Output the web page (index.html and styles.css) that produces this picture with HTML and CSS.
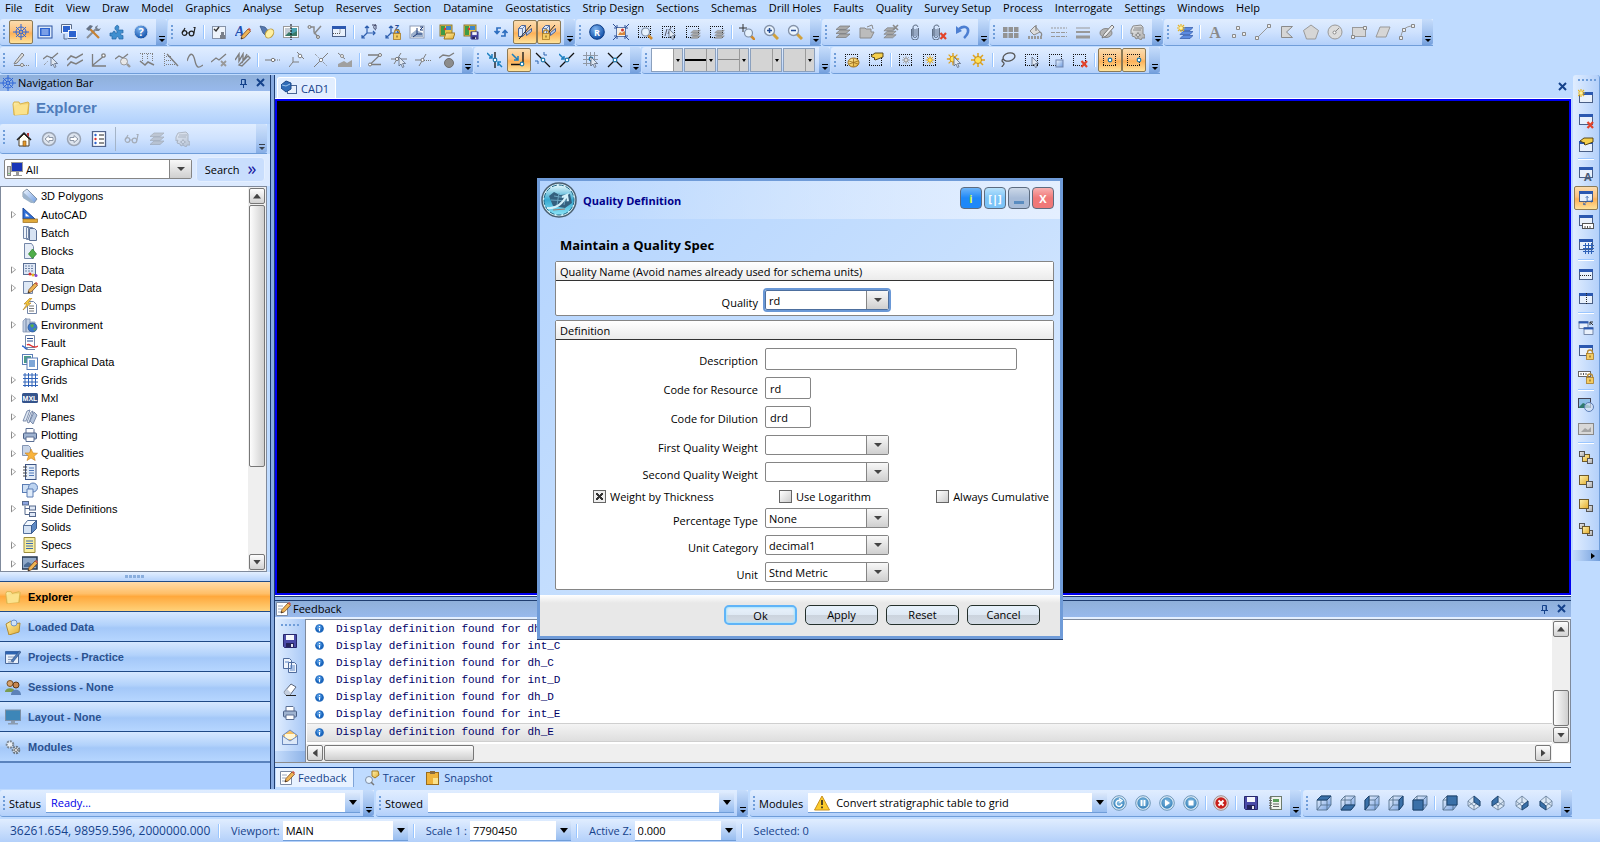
FILE: index.html
```html
<!DOCTYPE html>
<html lang="en">
<head>
    <meta charset="UTF-8">
    <title>Quality Definition</title>
    <link rel="stylesheet" href="styles.css">
</head>
<body>

<!-- icon sprite -->
<svg class="sprite" aria-hidden="true">
    <defs>
        <linearGradient id="g-blue" x1="0" y1="0" x2="1" y2="1"><stop offset="0" stop-color="#f2f8ff"/><stop offset="1" stop-color="#6d9be0"/></linearGradient>
        <linearGradient id="g-gold" x1="0" y1="0" x2="1" y2="1"><stop offset="0" stop-color="#fff3b0"/><stop offset="1" stop-color="#e3ac2c"/></linearGradient>
        <linearGradient id="g-gray" x1="0" y1="0" x2="1" y2="1"><stop offset="0" stop-color="#f0f0f0"/><stop offset="1" stop-color="#a8a8a8"/></linearGradient>
        <radialGradient id="g-ball" cx=".4" cy=".3" r=".7"><stop offset="0" stop-color="#7fb4f0"/><stop offset="1" stop-color="#0f4fa8"/></radialGradient>
        <radialGradient id="g-disc" cx=".5" cy=".4" r=".6"><stop offset="0" stop-color="#8fc4e8"/><stop offset="1" stop-color="#3580b8"/></radialGradient>
        <linearGradient id="g-orb" x1="0" y1="0" x2="0" y2="1"><stop offset="0" stop-color="#e6f8fd"/><stop offset=".5" stop-color="#36a8d0"/><stop offset="1" stop-color="#8be4f8"/></linearGradient>
    </defs>

    <!-- shared parts -->
    <symbol id="p-dots" viewBox="0 0 16 16"><path d="M1 2.500h13M1 13.500h13M1.500 2v12M13.500 2v12" fill="none" stroke="#111" stroke-dasharray="1 1"/></symbol>
    <symbol id="p-cursor" viewBox="0 0 16 16"><path d="M8 5v9l2-2 1.500 3.500 1.500-.7-1.400-3.300h3z" fill="#dfe7f2" stroke="#5c6a80" stroke-width=".8"/></symbol>
    <symbol id="p-lens" viewBox="0 0 16 16"><path d="M10.500 10.500l4.500 4.500" stroke="#d08a2c" stroke-width="2.600"/><circle cx="8.500" cy="8" r="4" fill="#e6f2fd" stroke="#7e8ea6" stroke-width="1.200"/></symbol>
    <symbol id="p-x" viewBox="0 0 16 16"><path d="M9.500 9l5.500 6M15 9l-5.500 6" stroke="#e2432a" stroke-width="2.200"/></symbol>
    <symbol id="p-pencil" viewBox="0 0 16 16"><path d="M6 15l1-3.500 6-6.500 2.500 2.300-6 6.500z" fill="#efb454" stroke="#7a4a20" stroke-width=".8"/><path d="M13 5l1-1.200 2 2-1 1.500z" fill="#d05a4a"/><path d="M6 15l.5-1.700 1.300 1z" fill="#222"/></symbol>
    <symbol id="p-lock" viewBox="0 0 16 16"><path d="M9.500 10V8.500a2.500 2.500 0 0 1 5 0V10" fill="none" stroke="#b58a35" stroke-width="1.300"/><rect x="8.500" y="9.500" width="7" height="6" fill="#f4cc62" stroke="#a87c28" stroke-width=".8"/><path d="M12 11.500v2" stroke="#6d4c10"/></symbol>
    <symbol id="p-win" viewBox="0 0 16 16"><rect x="1.500" y="2.500" width="13" height="10" fill="#e9f1fc" stroke="#4a5f86"/><path d="M1 3.500h14" stroke="#2b58b0" stroke-width="3"/></symbol>
    <symbol id="p-sun" viewBox="0 0 16 16"><path d="M8 1v14M1 8h14M3 3l10 10M13 3L3 13" stroke="#e0a21c" stroke-width="1.500"/><circle cx="8" cy="8" r="3.500" fill="#ffe25a" stroke="#c98d12"/></symbol>
    <symbol id="p-spark" viewBox="0 0 16 16"><path d="M4 0v8M0 4h8M1 1l6 6M7 1L1 7" stroke="#e8b420" stroke-width="1.200"/><circle cx="4" cy="4" r="1.800" fill="#fff2a0"/></symbol>
    <symbol id="p-node" viewBox="0 0 16 16"><circle cx="8" cy="8" r="1.800" fill="#fff" stroke="#1d78a8" stroke-width="1.200"/></symbol>
    <symbol id="p-layers" viewBox="0 0 16 16"><path d="M1 13.500l4-3.500h10l-4 3.500zM1 9.500L5 6h10l-4 3.500zM1 5.500L5 2h10l-4 3.500z" fill="#a9a9a9" stroke="#777" stroke-width=".7"/></symbol>
    <symbol id="p-cube" viewBox="0 0 16 16"><path d="M1 5l4-4h10v9l-4 5H1z" fill="url(#g-blue)"/><path d="M1 5h10v10H1zM1 5l4-4h10v9l-4 5M11 5l4-4M5 1v9h10M5 10l-4 5" fill="none" stroke="#56728f" stroke-width=".9"/></symbol>

    <!-- row 1 -->
    <symbol id="wheel" viewBox="0 0 16 16"><g fill="none" stroke="#2f66d8"><circle cx="8" cy="8" r="5"/><circle cx="8" cy="8" r="1.500"/><path d="M8 0v6M8 10v6M0 8h6M10 8h6M3 3l4 4M9 9l4 4M13 3L9 7M7 9l-4 4"/></g></symbol>
    <symbol id="monitor" viewBox="0 0 16 16"><rect x="1" y="2" width="14" height="12" fill="#dbe9fb" stroke="#2a52a0"/><rect x="3" y="4" width="10" height="8" fill="#2c63cf"/><path d="M4.500 6h7M4.500 8h7M4.500 10h7" stroke="#c9ddff"/></symbol>
    <symbol id="windows" viewBox="0 0 16 16"><rect x="1.500" y="1.500" width="8" height="7" fill="#2c63cf" stroke="#f2f6fc"/><rect x="7.500" y="6.500" width="8" height="7" fill="#2c63cf" stroke="#f2f6fc"/><path d="M.5 9V.5h10V5M6.500 14.500h9.500M3 10v5h3" stroke="#5a6c8c" fill="none"/></symbol>
    <symbol id="tools" viewBox="0 0 16 16"><path d="M2 14L11 5" stroke="#8a8f98" stroke-width="2"/><path d="M5 5l9 9" stroke="#c68132" stroke-width="2.200"/><path d="M1 5l4-4 3 1-4 5z" fill="#667386"/><path d="M10 3l3-2-1 3 2 1 2-1-2 3-3 0z" fill="#75808f"/></symbol>
    <symbol id="puzzle" viewBox="0 0 16 16"><path d="M1 9h3c-1-2 3-3 2 0h2V7c-2-1-3-3-1-5s4 1 2 4h5v3c-3-1-3 3 0 2.500V15H10c0-3-3-3-3 0H3v-3H1z" fill="#3f8fd0" stroke="#2466a4" stroke-width=".7"/></symbol>
    <symbol id="help" viewBox="0 0 16 16"><circle cx="8" cy="8" r="7" fill="url(#g-ball)" stroke="#d4e2f6"/><text x="8" y="12" text-anchor="middle" font-size="11" font-weight="bold" fill="#fff">?</text></symbol>
    <symbol id="glasses" viewBox="0 0 16 16"><g fill="none" stroke="#222" stroke-width="1.200"><circle cx="3.500" cy="9" r="2.300"/><circle cx="10.500" cy="9.500" r="2.300"/><path d="M5.800 9h2.400M1.200 9L4 4M12.800 9.500L14 3.500h-1.500"/></g></symbol>
    <symbol id="checkimg" viewBox="0 0 16 16"><rect x="1.500" y="2.500" width="13" height="12" fill="#eef3fa" stroke="#8592a8"/><path d="M3 5l2 2 3-4" stroke="#333" fill="none" stroke-width="1.400"/><path d="M9 11h5v4H9zM10 8h3v3h-3z" fill="#7a7f88"/></symbol>
    <symbol id="apencil" viewBox="0 0 16 16"><text x="0" y="12" font-size="14" font-weight="bold" font-style="italic" font-family="Liberation Serif, serif" fill="#1f4fb0">A</text><use href="#p-pencil"/></symbol>
    <symbol id="lamp" viewBox="0 0 16 16"><path d="M1 2l5 1 5 6-3 4-4-4z" fill="#5678b0" stroke="#32507e" stroke-width=".7"/><ellipse cx="10.500" cy="9.500" rx="5" ry="3.600" transform="rotate(-50 10.500 9.500)" fill="#fff0a0" stroke="#c0a040"/></symbol>
    <symbol id="imgsplit" viewBox="0 0 16 16"><rect x=".5" y="2.500" width="15" height="11" fill="#fff" stroke="#999"/><path d="M2 4h6v8H2z" fill="#c4ccd4"/><path d="M8 4h6v8H8z" fill="#4aa0b0"/><path d="M2 12l4-4 3 2 5-3v5z" fill="#3b7a68"/><path d="M8 0v16" stroke="#000" stroke-dasharray="2 1"/></symbol>
    <symbol id="pathpen" viewBox="0 0 16 16"><path d="M2 3l5 0 0 5 4 5M7 10l7-8" fill="none" stroke="#8b8b8b" stroke-width="1.500"/><circle cx="2.500" cy="3" r="1.500" fill="#ddd" stroke="#777"/><circle cx="11" cy="13" r="1.500" fill="#ddd" stroke="#777"/></symbol>
    <symbol id="rulerwin" viewBox="0 0 16 16"><use href="#p-win"/><path d="M2 9.500h7v-4" stroke="#555" stroke-dasharray="1 1" fill="none"/></symbol>
    <symbol id="axes" viewBox="0 0 16 16"><g fill="none" stroke="#2f5fae" stroke-width="1.200"><path d="M6 9V2M6 9l-5 5M6 9h8M4 4l2-2 2 2M1 11v3h3M12 7l2 2-2 2"/></g></symbol>
    <symbol id="axesrot" viewBox="0 0 16 16"><use href="#axes"/><path d="M11 1h4v4M15 1c-3 0-3 4 0 5" stroke="#3a3f60" fill="none"/></symbol>
    <symbol id="axeslock" viewBox="0 0 16 16"><use href="#axes"/><text x="10" y="6" font-size="7" font-weight="bold" fill="#234a94">Z</text><use href="#p-lock"/></symbol>
    <symbol id="axesimg" viewBox="0 0 16 16"><rect x="1" y="2" width="14" height="12" fill="#fff" stroke="#8d9bb5"/><path d="M2 10l5-4 7 3v4H2z" fill="#9db0cc"/><path d="M8 10V4M8 10l-4 3M8 10h5M11 3h3l-3 3h3" stroke="#1d3a78" fill="none"/></symbol>
    <symbol id="mapfolder" viewBox="0 0 16 16"><rect x="1" y="1" width="12" height="11" fill="#e8c24a" stroke="#8b7a35"/><path d="M2 2h4v9H2z" fill="#3f9b46"/><path d="M7 2h5v4H7z" fill="#3f86c8"/><circle cx="6" cy="5" r="1.200" fill="#d33"/><path d="M5 15l2-6h9l-2 6z" fill="url(#g-gold)" stroke="#a07820"/></symbol>
    <symbol id="save" viewBox="0 0 16 16"><path d="M1.500 1.500h13v13h-12l-1-1z" fill="#4a4aa8" stroke="#27276c"/><path d="M4 2h8v5H4z" fill="#f4f6fb"/><path d="M4 10h8v4H4z" fill="#23235c"/><path d="M9 11h2v3H9z" fill="#e6e6f0"/></symbol>
    <symbol id="mapsave" viewBox="0 0 16 16"><rect x="1" y="1" width="12" height="11" fill="#e8c24a" stroke="#8b7a35"/><path d="M2 2h4v9H2z" fill="#3f9b46"/><path d="M7 2h5v4H7z" fill="#3f86c8"/><circle cx="6" cy="5" r="1.200" fill="#d33"/><use href="#save" x="7" y="7" width="9" height="9"/></symbol>
    <symbol id="refresh" viewBox="0 0 16 16"><path d="M8 4H4v5M1.500 7L4 9.500 6.500 7M8 12h4V7M9.500 9L12 6.500 14.500 9" fill="none" stroke="#2f6fc0" stroke-width="1.700"/></symbol>
    <symbol id="solid" viewBox="0 0 16 16"><path d="M1.500 4.500l3-3h4v8l-3 3h-4z" fill="#dbe8fb" stroke="#4c6496"/><path d="M1.500 4.500h4v8M5.500 4.500l3-3" fill="none" stroke="#4c6496" stroke-width=".8"/><path d="M9.500 8.500l5-4v3l-5 4z" fill="#b4caee" stroke="#4c6496"/><path d="M2 15L14 1" stroke="#222"/></symbol>
    <symbol id="solidlock" viewBox="0 0 16 16"><use href="#solid"/><use href="#p-lock" x="-7" y="0"/></symbol>
    <symbol id="rball" viewBox="0 0 16 16"><circle cx="8" cy="8" r="7.300" fill="url(#g-ball)" stroke="#0d3c86"/><text x="8" y="11.500" text-anchor="middle" font-size="9" font-weight="bold" fill="#fff">R</text></symbol>
    <symbol id="fit" viewBox="0 0 16 16"><rect x="3.500" y="3.500" width="9" height="9" fill="#f6efe4" stroke="#5c77ab"/><path d="M5 11l2-3 2 1 3-2v4z" fill="#d9873a"/><circle cx="9.500" cy="6" r="1.500" fill="#c33"/><path d="M0 0l4 4M16 0l-4 4M0 16l4-4M16 16l-4-4M1 4h3V1M15 4h-3V1M1 12h3v3M15 12h-3v3" stroke="#2d4f94" fill="none"/></symbol>
    <symbol id="zoomrect" viewBox="0 0 16 16"><use href="#p-dots"/><use href="#p-lens"/></symbol>
    <symbol id="selpick" viewBox="0 0 16 16"><use href="#p-dots"/><path d="M4 12l2-7M7 10l3-7" stroke="#556"/><use href="#p-cursor"/></symbol>
    <symbol id="sellayers" viewBox="0 0 16 16"><use href="#p-dots"/><use href="#p-layers" x="5" y="5" width="11" height="11"/></symbol>
    <symbol id="zoompt" viewBox="0 0 16 16"><path d="M4 0v8M0 4h8" stroke="#333"/><use href="#p-lens" x="1" y="1"/></symbol>
    <symbol id="zoomin" viewBox="0 0 16 16"><path d="M10 10l5 5" stroke="#d0a03c" stroke-width="3"/><circle cx="6.500" cy="6.500" r="5" fill="#eaf4fe" stroke="#8492a8" stroke-width="1.300"/><path d="M4 6.500h5M6.500 4v5" stroke="#234a94" stroke-width="1.500"/></symbol>
    <symbol id="zoomout" viewBox="0 0 16 16"><path d="M10 10l5 5" stroke="#d0a03c" stroke-width="3"/><circle cx="6.500" cy="6.500" r="5" fill="#eaf4fe" stroke="#8492a8" stroke-width="1.300"/><path d="M4 6.500h5" stroke="#234a94" stroke-width="1.500"/></symbol>
    <symbol id="grayfolder" viewBox="0 0 16 16"><path d="M1 14V4h5l1 1h5v3h3l-3 6z" fill="#bcbcbc" stroke="#8a8a8a"/><path d="M8 3l5-2 1 4" fill="none" stroke="#888"/></symbol>
    <symbol id="layersx" viewBox="0 0 16 16"><use href="#p-layers" y="2" width="14" height="14"/><path d="M10 1l5 5M15 1l-5 5" stroke="#8a8a8a" stroke-width="1.600"/></symbol>
    <symbol id="clip" viewBox="0 0 16 16"><path d="M10 4.500v7a2 2 0 0 1-4 0V4a2.500 2.500 0 0 1 5-1M6 4v8M8 5v7M11.500 4v8.500a3.500 3.500 0 0 1-7 0V5" fill="none" stroke="#5f6f86"/></symbol>
    <symbol id="clipx" viewBox="0 0 16 16"><use href="#clip" x="-3"/><use href="#p-x"/></symbol>
    <symbol id="undo" viewBox="0 0 16 16"><path d="M4 5c5-4 10-2 9 3-.5 3-3 5-4 6" fill="none" stroke="#4d7fd2" stroke-width="2.600"/><path d="M1 2v8l6-3z" fill="#4d7fd2"/></symbol>
    <symbol id="grid4" viewBox="0 0 16 16"><path d="M0 3h4.500v5H0zM5.500 3H10v5H5.500zM11 3h4.500v5H11zM0 9h4.500v5H0zM5.500 9H10v5H5.500zM11 9h4.500v5H11z" fill="#939393"/></symbol>
    <symbol id="bucket" viewBox="0 0 16 16"><path d="M3 7l5-5 5 6-6 3z" fill="#ddd" stroke="#888"/><path d="M9 1v6M13 8c2 1 2 3 1 4" stroke="#888" fill="none" stroke-width="1.300"/><path d="M1 13.500h14" stroke="#999" stroke-width="3" stroke-dasharray="2 1"/></symbol>
    <symbol id="dashes" viewBox="0 0 16 16"><path d="M0 4h16" stroke="#999" stroke-dasharray="2 1"/><path d="M0 8.500h16M0 12.500h16" stroke="#999" stroke-dasharray="4 1"/></symbol>
    <symbol id="lines" viewBox="0 0 16 16"><path d="M1 4h14" stroke="#999"/><path d="M1 8h14" stroke="#999" stroke-width="2"/><path d="M1 13h14" stroke="#999" stroke-width="3"/></symbol>
    <symbol id="brush" viewBox="0 0 16 16"><ellipse cx="7" cy="9" rx="6" ry="4.500" fill="#b4b4b4" stroke="#888"/><path d="M3 14l2-4 8-9 2 2-8 9z" fill="#eee" stroke="#777"/></symbol>
    <symbol id="hand" viewBox="0 0 16 16"><path d="M2 6l2-4 8-1 2 2v7l2 1v3h-3l-1 2-3-2-2 1-1-2-3-1 1-3-2 1z" fill="url(#g-gray)" stroke="#8a8a8a"/><path d="M4 6h8M5 4h8M9 8v6M6 11h6" stroke="#8a8a8a"/><circle cx="9" cy="11" r="1.500" fill="#eee" stroke="#888"/></symbol>
    <symbol id="newlayer" viewBox="0 0 16 16"><path d="M3 14.500l3-3h10l-3 3zM3 10.500l3-3h10l-3 3zM3 6.500l3-3h10l-3 3z" fill="#5c8be0" stroke="#2e57a8" stroke-width=".7"/><use href="#p-spark"/></symbol>
    <symbol id="bigA" viewBox="0 0 16 16"><text x="8" y="14" text-anchor="middle" font-size="16" font-weight="bold" font-family="Liberation Serif, serif" fill="#8a8a8a">A</text></symbol>
    <symbol id="points" viewBox="0 0 16 16"><g fill="#eee" stroke="#8a8a8a"><path d="M1.500 10.500h3v3h-3zM5.500 2.500h3v3h-3zM11.500 8.500h3v3h-3z"/></g></symbol>
    <symbol id="line" viewBox="0 0 16 16"><path d="M2 14L14 2" stroke="#999"/><path d="M.5 12.500h3v3h-3zM12.500.5h3v3h-3z" fill="#eee" stroke="#8a8a8a"/></symbol>
    <symbol id="poly" viewBox="0 0 16 16"><path d="M2.500 2.500h11l-6 5.500 6 5.500h-11z" fill="#d6d6d6" stroke="#8a8a8a"/></symbol>
    <symbol id="penta" viewBox="0 0 16 16"><path d="M8 1l7.500 5.500L12.500 15h-9L.5 6.500z" fill="#d6d6d6" stroke="#999"/></symbol>
    <symbol id="circle" viewBox="0 0 16 16"><circle cx="8" cy="8" r="7" fill="#dcdcdc" stroke="#999"/><path d="M8 8l4-4" stroke="#888"/><circle cx="7.500" cy="8.500" r="1.500" fill="#fff" stroke="#888"/></symbol>
    <symbol id="rect" viewBox="0 0 16 16"><rect x="1.500" y="3.500" width="13" height="9" fill="#d6d6d6" stroke="#999"/><path d="M12.500 2.500h3v3h-3zM.5 11.500h3v3h-3z" fill="#eee" stroke="#888"/></symbol>
    <symbol id="para" viewBox="0 0 16 16"><path d="M1 13L5 3h10l-4 10z" fill="#d6d6d6" stroke="#999"/></symbol>
    <symbol id="arc" viewBox="0 0 16 16"><path d="M2 14C2 7 6 2 14 2" fill="none" stroke="#999"/><path d="M.5 12.500h3v3h-3zM12.500.5h3v3h-3zM3.500 4.500h3v3h-3z" fill="#eee" stroke="#888"/></symbol>

    <!-- row 2 -->
    <symbol id="penpt" viewBox="0 0 16 16"><g fill="none" stroke="#7e7e7e"><path d="M2 10l7-9 2 2-7 8-3 1z" fill="#ddd"/><path d="M1 13.500h7"/><circle cx="9" cy="13" r="1.500" fill="#fff"/><path d="M11 13.500h5" stroke-dasharray="1 1"/></g></symbol>
    <symbol id="polysel" viewBox="0 0 16 16"><g fill="none" stroke="#7e7e7e"><path d="M0 7l4-3 5 2 6-5" stroke-width="1.300"/><path d="M1 13l4-4" stroke-dasharray="1 1"/></g><use href="#p-cursor"/></symbol>
    <symbol id="waves" viewBox="0 0 16 16"><path d="M0 8l4-4 5 2 7-4M0 14l4-4 5 2 7-4" fill="none" stroke="#7e7e7e" stroke-width="1.500"/></symbol>
    <symbol id="angle" viewBox="0 0 16 16"><g fill="none" stroke="#7e7e7e" stroke-width="1.300"><path d="M1.500 2v12H15M2 13L13 4"/><circle cx="12.500" cy="3.500" r="1.700" fill="#fff"/></g></symbol>
    <symbol id="polyzoom" viewBox="0 0 16 16"><path d="M0 7l4-3 4 2 5-4" fill="none" stroke="#7e7e7e" stroke-width="1.300"/><path d="M12 12l3 3" stroke="#999" stroke-width="2.400"/><circle cx="9" cy="9.500" r="3.500" fill="#e8e8e8" stroke="#999"/></symbol>
    <symbol id="drape" viewBox="0 0 16 16"><path d="M1 1.500h14M3.500 2v7M8.500 2v5M13.500 2v7" fill="none" stroke="#7e7e7e" stroke-dasharray="1 1"/><path d="M1 9l5 4 3-3 6 3" fill="none" stroke="#7e7e7e" stroke-width="1.500"/></symbol>
    <symbol id="project" viewBox="0 0 16 16"><path d="M1.500 1v14M3 4.500h5M3 8.500h7M3 12.500h9" fill="none" stroke="#7e7e7e" stroke-dasharray="1 1"/><path d="M4 2l11 12" stroke="#7e7e7e" stroke-width="1.400"/></symbol>
    <symbol id="curve" viewBox="0 0 16 16"><path d="M0 9c3-9 6-9 8 0s5 6 8 4" fill="none" stroke="#7e7e7e" stroke-width="1.300"/></symbol>
    <symbol id="curvex" viewBox="0 0 16 16"><path d="M0 10l5-4 3 2 7-6" fill="none" stroke="#7e7e7e" stroke-width="1.300"/><path d="M10 9l5 5M15 9l-5 5" stroke="#999" stroke-width="1.800"/></symbol>
    <symbol id="hatchpen" viewBox="0 0 16 16"><path d="M0 8l4-6v7l4-7v7l4-7M4 13L13 4l2 2-8 8z" fill="none" stroke="#7e7e7e" stroke-width="1.400"/></symbol>
    <symbol id="ptline" viewBox="0 0 16 16"><path d="M0 8h6" stroke="#777"/><path d="M10 8h6" stroke="#777" stroke-dasharray="1 1"/><circle cx="8" cy="8" r="1.700" fill="#fff" stroke="#777"/></symbol>
    <symbol id="axesnode" viewBox="0 0 16 16"><g fill="none" stroke="#7e7e7e"><path d="M4 10V5M4 10l-4 5M4 10h6M8 0l7 7"/><circle cx="11" cy="4" r="1.800" fill="#fff"/></g></symbol>
    <symbol id="segx" viewBox="0 0 16 16"><path d="M1 15l6-6M9 7l6-6" stroke="#7e7e7e"/><path d="M2 2l4 4M10 10l4 4" stroke="#7e7e7e" stroke-dasharray="1 1"/><circle cx="8" cy="8" r="1.700" fill="#fff" stroke="#888"/></symbol>
    <symbol id="area" viewBox="0 0 16 16"><path d="M1 1l7 6" stroke="#7e7e7e"/><circle cx="5" cy="4" r="1.500" fill="#fff" stroke="#888"/><path d="M1 15v-3l6-3 3 2 5-3v7z" fill="#a0a0a0"/></symbol>
    <symbol id="zseg" viewBox="0 0 16 16"><path d="M1 3h12L3 12.500h11" fill="none" stroke="#7e7e7e" stroke-width="1.300"/><circle cx="13" cy="3" r="1.500" fill="#fff" stroke="#777"/><circle cx="3" cy="12.500" r="1.500" fill="#fff" stroke="#777"/></symbol>
    <symbol id="crosssel" viewBox="0 0 16 16"><path d="M0 7h16M3 12l7-11" stroke="#7e7e7e"/><circle cx="6" cy="7" r="1.600" fill="#fff" stroke="#777"/><use href="#p-cursor"/></symbol>
    <symbol id="crossdot" viewBox="0 0 16 16"><path d="M0 8h8M4 14l7-12" stroke="#7e7e7e"/><path d="M9 8.500h7" stroke="#777" stroke-dasharray="1 1"/><circle cx="7.500" cy="8" r="1.600" fill="#fff" stroke="#777"/></symbol>
    <symbol id="bomb" viewBox="0 0 16 16"><path d="M0 6l4-3 6 1 5-3" fill="none" stroke="#7e7e7e" stroke-width="1.300"/><circle cx="10" cy="11" r="4.500" fill="#8c8c8c" stroke="#6f6f6f"/></symbol>
    <symbol id="snap1" viewBox="0 0 16 16"><path d="M8 0v16" stroke="#111" stroke-width="1.300"/><path d="M0 1l5 5M2 6h3V2M15 15l-4-4M14 10h-3v4" fill="none" stroke="#1b7fc0" stroke-width="1.500"/><use href="#p-node"/></symbol>
    <symbol id="snap2" viewBox="0 0 16 16"><path d="M0 12.500h10M12 0v11" stroke="#111" stroke-width="1.300"/><path d="M1 2l6 6M3 8h4V4" fill="none" stroke="#1b7fc0" stroke-width="1.500"/><use href="#p-node" x="3" y="4"/></symbol>
    <symbol id="snap3" viewBox="0 0 16 16"><path d="M1 1l14 14" stroke="#111" stroke-width="1.300"/><path d="M0 9h3M9 3V0M3 12V9M12 3H9" stroke="#2a62b0" fill="none"/><use href="#p-node"/></symbol>
    <symbol id="snap4" viewBox="0 0 16 16"><path d="M1 15L15 1" stroke="#111" stroke-width="1.300"/><path d="M0 2l5 5M2 7h3V4" fill="none" stroke="#1b7fc0" stroke-width="1.500"/><use href="#p-node"/></symbol>
    <symbol id="snap5" viewBox="0 0 16 16"><path d="M3.500 0v14M7.500 0v14M11.500 0v14M0 3.500h15M0 7.500h15M0 11.500h15" stroke="#9098a4"/><use href="#p-node" y="-1"/><use href="#p-cursor"/></symbol>
    <symbol id="snap6" viewBox="0 0 16 16"><path d="M1 1l14 14M15 1L1 15" stroke="#111" stroke-width="1.300"/><use href="#p-node"/></symbol>
    <symbol id="selgear" viewBox="0 0 16 16"><use href="#p-dots"/><ellipse cx="9.500" cy="10.500" rx="5.500" ry="4.500" fill="url(#g-gold)" stroke="#9a6c1c"/><path d="M5 9l9 3M5 12l9-3M9.500 6.500v8" stroke="#9a6c1c" stroke-width=".8"/></symbol>
    <symbol id="selhand" viewBox="0 0 16 16"><use href="#p-dots"/><path d="M3 4l4-3h8v4l-5 2-3 1-1-1 1-1-3-1z" fill="#f5cf4c" stroke="#4a3a10" stroke-width=".9"/></symbol>
    <symbol id="selsungray" viewBox="0 0 16 16"><use href="#p-dots"/><path d="M8 4v8M4 8h8M5 5l6 6M11 5l-6 6" stroke="#aaa"/><circle cx="8" cy="8" r="2" fill="#ddd" stroke="#999"/></symbol>
    <symbol id="selsun" viewBox="0 0 16 16"><use href="#p-dots"/><use href="#p-sun" x="3" y="3" width="10" height="10"/></symbol>
    <symbol id="sunpick" viewBox="0 0 16 16"><use href="#p-sun" width="14" height="14"/><use href="#p-cursor"/></symbol>
    <symbol id="lasso" viewBox="0 0 16 16"><ellipse cx="9" cy="5" rx="6" ry="4" transform="rotate(-15 9 5)" fill="none" stroke="#555" stroke-width="1.300"/><path d="M3 7c-3 3 2 3 1 5s-2 2-2 3" fill="none" stroke="#555" stroke-width="1.300"/></symbol>
    <symbol id="selcur" viewBox="0 0 16 16"><use href="#p-dots"/><use href="#p-cursor"/></symbol>
    <symbol id="selblue" viewBox="0 0 16 16"><use href="#p-dots"/><rect x="8" y="8" width="7" height="7" fill="url(#g-blue)" stroke="#7085ad"/></symbol>
    <symbol id="selx" viewBox="0 0 16 16"><use href="#p-dots"/><use href="#p-x"/></symbol>
    <symbol id="selc" viewBox="0 0 16 16"><use href="#p-dots"/><use href="#p-node"/></symbol>
    <symbol id="selr" viewBox="0 0 16 16"><use href="#p-dots"/><use href="#p-node" x="5"/></symbol>

    <!-- navigation -->
    <symbol id="folder" viewBox="0 0 18 16"><path d="M1 4l1-2h5l1 2 8-2 1 1-1 11-14 1z" fill="url(#g-gold)" stroke="#d8b24c"/><path d="M3 6l13-2-1 10-12 1z" fill="#fbe28c"/></symbol>
    <symbol id="home" viewBox="0 0 16 16"><path d="M3 8v7h10V8L8 3z" fill="#fffef4" stroke="#4a3c28"/><path d="M1 9l7-7 7 7" fill="none" stroke="#222" stroke-width="1.500"/><path d="M7 10h3v5H7z" fill="#e49a2c" stroke="#7a4c14" stroke-width=".6"/><path d="M11 2h2v4l-2-2z" fill="#b33"/></symbol>
    <symbol id="back" viewBox="0 0 16 16"><circle cx="8" cy="8" r="6.500" fill="#dde4ee" stroke="#9aa4b4" stroke-width="1.500"/><path d="M4 8l4-3.500v2h4v3H8v2z" fill="#fff" stroke="#8c96a6"/></symbol>
    <symbol id="fwd" viewBox="0 0 16 16"><circle cx="8" cy="8" r="6.500" fill="#dde4ee" stroke="#9aa4b4" stroke-width="1.500"/><path d="M12 8L8 4.500v2H4v3h4v2z" fill="#fff" stroke="#8c96a6"/></symbol>
    <symbol id="listopt" viewBox="0 0 16 16"><rect x="1.500" y=".5" width="13" height="15" fill="#fff" stroke="#52648c" stroke-width="1.300"/><circle cx="4.500" cy="4" r="1.200" fill="#2c63cf"/><circle cx="4.500" cy="8" r="1.200" fill="#d33"/><circle cx="4.500" cy="12" r="1.200" fill="#2c63cf"/><path d="M8 4h5M8 8h5M8 12h5" stroke="#222"/></symbol>
    <symbol id="glassesg" viewBox="0 0 16 16"><g fill="none" stroke="#a4acb8" stroke-width="1.200"><circle cx="3.500" cy="9" r="2.300"/><circle cx="10.500" cy="9.500" r="2.300"/><path d="M5.800 9h2.400M1.200 9L4 4M12.800 9.500L14 3.500h-1.500"/></g></symbol>
    <symbol id="computer" viewBox="0 0 16 16"><rect x="4.500" y="1.500" width="11" height="9" fill="#1734b8" stroke="#9a9a9a"/><path d="M9 11v3H6v1h9v-1h-3v-3z" fill="#999"/><rect x=".5" y="5.500" width="3" height="9" fill="#ccc" stroke="#888"/><path d="M2 12v1" stroke="#3b3"/></symbol>
    <symbol id="pin" viewBox="0 0 10 10"><path d="M2.500 6V1.500h4V6M1 6.500h7M4.500 7v3M6 2v4" fill="none" stroke="#15428b"/></symbol>
    <symbol id="close" viewBox="0 0 10 10"><path d="M1 1l7 7M8 1L1 8" stroke="#15428b" stroke-width="2"/></symbol>

    <!-- tree -->
    <symbol id="t-poly" viewBox="0 0 16 16"><path d="M1 4l4-3 10 10-3 4L1 9z" fill="url(#g-blue)" stroke="#6c7f96" stroke-width=".8"/><path d="M1 4v6l8 5h4z" fill="#9db4cc"/></symbol>
    <symbol id="t-cad" viewBox="0 0 16 16"><path d="M1 1v11h12z" fill="#2f6fd8" stroke="#1c4798"/><path d="M3.500 6v3.500h4z" fill="#fff"/><rect x="1" y="12" width="14.500" height="3.500" fill="#e0a93a" stroke="#9a6c1c" stroke-width=".7"/></symbol>
    <symbol id="t-batch" viewBox="0 0 16 16"><path d="M1.500 1.500h5v12h-5zM4.500 2.500h6v12h-6z" fill="#eef3fa" stroke="#7487a8"/><path d="M7.500 3.500h5l2 2v10h-7z" fill="#d7e3f3" stroke="#5a6f94"/></symbol>
    <symbol id="t-block" viewBox="0 0 16 16"><path d="M2.500.5h7l2 3v12h-9z" fill="#e6edf7" stroke="#7487a8"/><path d="M10.500 6l4 5-4 4.500-4-4.500z" fill="#4fae4a" stroke="#2c7a2c" stroke-width=".7"/></symbol>
    <symbol id="t-data" viewBox="0 0 16 16"><rect x="1.500" y="1.500" width="12" height="11" fill="#dfe8f6" stroke="#5a6f94"/><path d="M3 4h9M3 6.500h9M3 9h9" stroke="#6f84a8" stroke-dasharray="2 1"/><circle cx="8" cy="12" r="1.500" fill="#d33"/><circle cx="11" cy="13" r="1.500" fill="#e8b420"/><circle cx="14" cy="13.500" r="1.500" fill="#8844cc"/></symbol>
    <symbol id="t-design" viewBox="0 0 16 16"><path d="M1.500 1.500h9v12h-9z" fill="#dfe9f6" stroke="#7487a8"/><use href="#p-pencil" y="-2"/></symbol>
    <symbol id="t-dump" viewBox="0 0 16 16"><path d="M5.500 3.500h6l3 3v9h-9z" fill="#fff" stroke="#7487a8"/><path d="M7 8h5M7 10.500h5M7 13h5" stroke="#777"/><path d="M8 0L2 6h3l-4 6 8-7H6l4-5z" fill="#f6c93c" stroke="#b8862a" stroke-width=".7"/></symbol>
    <symbol id="t-env" viewBox="0 0 16 16"><path d="M1 15V4l3-3v14zM4 15V2h4v13zM8 5h5v9H8z" fill="#c2cfe2" stroke="#8496b4" stroke-width=".8"/><circle cx="10.500" cy="10.500" r="4.500" fill="#3c78cc" stroke="#24508f" stroke-width=".7"/><path d="M8 8l3-1 1 2-2 2zM11 12l3-1-1 3z" fill="#58b04a"/></symbol>
    <symbol id="t-fault" viewBox="0 0 16 16"><path d="M3.500.5h9v12h-9z" fill="#fff" stroke="#7487a8"/><path d="M5 3.500h6M5 6h6" stroke="#2a4d90"/><path d="M0 11c3 0 3 4 6 3" stroke="#2c63cf" stroke-width="1.400" fill="none"/><path d="M5 10c3-3 5 5 11 1" stroke="#d33" stroke-width="1.400" fill="none"/><path d="M4 14.500h9" stroke="#7487a8"/></symbol>
    <symbol id="t-graph" viewBox="0 0 16 16"><rect x=".5" y=".5" width="10" height="10" fill="#fff" stroke="#5c7fb8"/><path d="M2 2h7v7H2z" fill="#4c9c8a"/><rect x="5" y="4" width="10.500" height="11.500" fill="#fff" stroke="#5c7fb8"/><path d="M7 6h6v7H7z" fill="#7da6d8"/></symbol>
    <symbol id="t-grid" viewBox="0 0 16 16"><path d="M3 1v14M6.500 1v14M10 1v14M13.500 1v14M1 3h15M1 6.500h15M1 10h15M1 13.500h15" stroke="#2f62b8"/></symbol>
    <symbol id="t-mxl" viewBox="0 0 16 16"><rect y="3" width="16" height="10" rx="1.500" fill="#35548c"/><text x="8" y="11" text-anchor="middle" font-size="7" font-weight="bold" fill="#fff">MXL</text></symbol>
    <symbol id="t-plane" viewBox="0 0 16 16"><path d="M1 12L5 2l3-1-4 11zM5 13L9 3l2-1-4 12z" fill="#dde6f2" stroke="#66799c" stroke-width=".8"/><path d="M8 12l4-9 3 3-4 9z" fill="#b4c4dc" stroke="#66799c" stroke-width=".8"/></symbol>
    <symbol id="printer" viewBox="0 0 16 16"><path d="M4 6V1.500h7l1 1V6" fill="#fff" stroke="#5a6f94"/><rect x="1.500" y="6" width="13" height="6" rx="1" fill="#9fb3d0" stroke="#4a5f86"/><path d="M4 10h8v4.500H4z" fill="#fff" stroke="#5a6f94"/></symbol>
    <symbol id="t-qual" viewBox="0 0 16 16"><path d="M.5.5h6l2 2v8h-8z" fill="#c8d5e8" stroke="#8496b4"/><path d="M9 4l2 4 4.500.3-3.500 3 1.200 4.200L9 13l-4 2.500L6.500 11 3 8l4.500 0z" fill="#f9b43c" stroke="#c8801c" stroke-width=".6"/></symbol>
    <symbol id="t-report" viewBox="0 0 16 16"><rect x="3.500" y=".5" width="10.500" height="15" fill="#e4edf8" stroke="#3d5584"/><path d="M1 3h4M1 6h4M1 9h4M1 12h4" stroke="#444"/><path d="M7 4h5M7 6.500h5M7 9h5M7 11.500h5" stroke="#4f78b8"/></symbol>
    <symbol id="t-shape" viewBox="0 0 16 16"><rect x=".5" y="2.500" width="9" height="8" fill="#cfe0f4" stroke="#5a7cb4"/><circle cx="11" cy="5.500" r="4.500" fill="#bcd3f0" stroke="#5a7cb4"/><path d="M5 7h6v8H5z" fill="#e0ecfa" stroke="#5a7cb4"/></symbol>
    <symbol id="t-side" viewBox="0 0 16 16"><path d="M3 5v8.500h4M3 7.500h4" fill="none" stroke="#55688c"/><rect x=".5" y=".5" width="6" height="3.500" fill="#8ea6e0" stroke="#55688c"/><rect x="7.500" y="5" width="6" height="4" fill="#dfe8f6" stroke="#55688c"/><rect x="7.500" y="11.500" width="6" height="4" fill="#dfe8f6" stroke="#55688c"/></symbol>
    <symbol id="t-solid" viewBox="0 0 16 16"><path d="M1.500 6.500h8v8h-8z" fill="#d4e2f4" stroke="#55719c"/><path d="M1.500 6.500l4-5h9l-5 5z" fill="#f4f9ff" stroke="#55719c"/><path d="M9.500 6.500l5-5v8l-5 5z" fill="#5c88c4" stroke="#3c5c90"/></symbol>
    <symbol id="t-spec" viewBox="0 0 16 16"><path d="M2 .5h11v15H2z" fill="#f9efa0" stroke="#9c8c3c"/><path d="M4 4h7M4 6.500h7M4 9h7M4 11.500h7" stroke="#3d6ab0"/></symbol>
    <symbol id="t-surf" viewBox="0 0 16 16"><rect x="0" y="1" width="15" height="12" fill="#8fa8c8" stroke="#26374f" stroke-width="1.500"/><path d="M2 9l4-3 4 2 4-4v7H2z" fill="#4b6b94"/><use href="#p-pencil"/></symbol>

    <!-- nav buttons -->
    <symbol id="n-loaded" viewBox="0 0 16 16"><path d="M1 5l5-3 3 3 6-1-1 9-10 3z" fill="url(#g-gold)" stroke="#b08a34"/><circle cx="9" cy="4" r="3" fill="#cfe2f8" stroke="#6d93cc"/></symbol>
    <symbol id="n-proj" viewBox="0 0 16 16"><path d="M.5 2.500h13v12H.5z" fill="#e8f0fa" stroke="#4a6a9c"/><path d="M.5 4h13" stroke="#2c63b0" stroke-width="3"/><path d="M3 8h6M3 10.500h5M3 13h6" stroke="#8a9bb8"/><path d="M6 12L14 2l2 1-8 10z" fill="#4f7cb8" stroke="#2c4a80" stroke-width=".6"/></symbol>
    <symbol id="n-users" viewBox="0 0 16 16"><circle cx="5" cy="4.500" r="3" fill="#d8a26c" stroke="#7a5228"/><path d="M0 13c0-5 10-5 10 0z" fill="#7a9c50"/><circle cx="11" cy="6" r="3" fill="#c98850" stroke="#5a3818"/><path d="M6 16c0-7 10-7 10 0z" fill="#5c82b8"/></symbol>
    <symbol id="n-screen" viewBox="0 0 16 16"><rect x=".5" y="1" width="15" height="10.500" fill="#3d86b8" stroke="#7b8ea4"/><path d="M6 12h4v2h3v1.500H3V14h3z" fill="#8b9cb0"/></symbol>
    <symbol id="n-gears" viewBox="0 0 16 16"><circle cx="5" cy="5.500" r="3.300" fill="#e8eef4" stroke="#7a8694" stroke-width="2" stroke-dasharray="2 1"/><circle cx="11" cy="11" r="3.300" fill="#dfe8f0" stroke="#6b7885" stroke-width="2" stroke-dasharray="2 1"/><circle cx="11" cy="11" r="1.500" fill="#fff" stroke="#777"/></symbol>

    <!-- feedback -->
    <symbol id="note" viewBox="0 0 16 16"><path d="M1.500 1.500h11v13h-11z" fill="#fff" stroke="#7b8aa4"/><path d="M3 5h5M3 8h4M3 11h6" stroke="#98a6bd"/><use href="#p-pencil" y="-3" x="0"/></symbol>
    <symbol id="copy" viewBox="0 0 16 16"><path d="M1.500 1.500h6l2 2v8h-8zM6.500 5.500h6l2 2v8h-8z" fill="#eef4fc" stroke="#4f6b9c"/><path d="M3 5h4M8 9h5M8 11h5M8 13h5" stroke="#5f87c8"/></symbol>
    <symbol id="eraser" viewBox="0 0 16 16"><path d="M2 11l7-8 5 3-6 8H4z" fill="#fff" stroke="#5a6478"/><path d="M4 14.500h10" stroke="#222"/><path d="M2 11l2 3h4l1-2-4-4z" fill="#c4cede"/></symbol>
    <symbol id="mail" viewBox="0 0 16 16"><path d="M.5 6.500L8 1l7.500 5.500v9H.5z" fill="#f6c060" stroke="#6d8bbf"/><path d="M3 5h10v5H3z" fill="#fff7d8"/><path d="M.5 7L8 12l7.500-5v8.500H.5z" fill="#dce8f8" stroke="#6d8bbf"/></symbol>
    <symbol id="info" viewBox="0 0 10 10"><circle cx="5" cy="5" r="4.800" fill="#1c66bc"/><circle cx="4.500" cy="3.800" r="2.800" fill="#4b94e0"/><path d="M5 4.500V8M5 2.200v1.200" stroke="#fff" stroke-width="1.300"/></symbol>
    <symbol id="tracer" viewBox="0 0 16 16"><path d="M8 1h6l1 4-4 3-3-2z" fill="url(#g-gold)" stroke="#a07820"/><circle cx="5" cy="10" r="3.500" fill="#e6f2fd" stroke="#7e8ea6"/><path d="M7 12l3 3" stroke="#777" stroke-width="1.500"/></symbol>
    <symbol id="clipboard" viewBox="0 0 16 16"><rect x="1.500" y="2.500" width="12" height="12" fill="#efb33a" stroke="#9a6c1c"/><path d="M5 1h5v3H5z" fill="#8a6a3c"/><path d="M8 8h5v6H8z" fill="#fbe28c"/></symbol>
    <symbol id="tabcad" viewBox="0 0 16 16"><rect x="6.500" y="5.500" width="9" height="8" fill="#e8f0fb" stroke="#4a6696"/><path d="M0 5l5-4 5 2v6l-5 3-5-4z" fill="#2f6cb8" stroke="#1b4888"/><path d="M1 5l4 1 4-2" stroke="#9cc4ee" fill="none"/></symbol>

    <!-- window toolbar -->
    <symbol id="w-new" viewBox="0 0 16 16"><use href="#p-win" y="1"/><use href="#p-spark" x="-1"/></symbol>
    <symbol id="w-del" viewBox="0 0 16 16"><use href="#p-win" y="-1"/><use href="#p-x"/></symbol>
    <symbol id="w-prop" viewBox="0 0 16 16"><use href="#p-win" y="2"/><path d="M2 4l4-3h9v4l-5 2-3 1-1-1 1-1-3-1z" fill="#f5cf4c" stroke="#4a3a10" stroke-width=".9"/></symbol>
    <symbol id="w-text" viewBox="0 0 16 16"><use href="#p-win" y="-1"/><text x="6" y="15" font-size="11" font-weight="bold" fill="#4a5c78">A</text></symbol>
    <symbol id="w-axes" viewBox="0 0 16 16"><use href="#p-win" y="-1"/><use href="#axes" x="5" y="5" width="11" height="11"/></symbol>
    <symbol id="w-scale" viewBox="0 0 16 16"><use href="#p-win" y="-1"/><rect x="4.500" y="9.500" width="11" height="5" fill="#fff" stroke="#555"/><path d="M7 12v2M9.500 12v2M12 12v2" stroke="#555"/></symbol>
    <symbol id="w-grid" viewBox="0 0 16 16"><use href="#p-win" y="-1"/><path d="M7.500 5v11M10.500 5v11M13.500 5v11M5 7.500h11M5 10.500h11M5 13.500h11" stroke="#2f62b8"/></symbol>
    <symbol id="w-hsplit" viewBox="0 0 16 16"><use href="#p-win"/><path d="M2 8.500h12" stroke="#222" stroke-dasharray="1 1"/></symbol>
    <symbol id="w-vsplit" viewBox="0 0 16 16"><use href="#p-win"/><path d="M8.500 2v11" stroke="#222" stroke-dasharray="1 1"/></symbol>
    <symbol id="w-swap" viewBox="0 0 16 16"><use href="#p-win" width="11" height="11"/><use href="#p-win" x="5" y="6" width="11" height="11"/><path d="M15 5l-3-3M12 5V2h3" stroke="#333" fill="none"/></symbol>
    <symbol id="w-lock" viewBox="0 0 16 16"><use href="#p-win" y="-1"/><use href="#p-lock"/></symbol>
    <symbol id="w-rlock" viewBox="0 0 16 16"><rect x=".5" y="3.500" width="12" height="5" fill="#fff" stroke="#666"/><path d="M3 5v2M5.500 5v2M8 5v2" stroke="#555"/><use href="#p-lock"/></symbol>
    <symbol id="w-img" viewBox="0 0 16 16"><rect x=".5" y="1.500" width="12" height="9" fill="#8fc0e8" stroke="#445"/><path d="M1 10l4-4 7 3v2H1z" fill="#2f7a6c"/><circle cx="11" cy="10" r="4.500" fill="#d8e4f4" fill-opacity=".7" stroke="#5a7cb4"/></symbol>
    <symbol id="w-gimg" viewBox="0 0 16 16"><rect x=".5" y="2.500" width="15" height="11" fill="#d8d8d8" stroke="#888"/><path d="M3 11l4-4 3 2 3-3v5z" fill="#a4a4a4"/></symbol>
    <symbol id="w-z1" viewBox="0 0 16 16"><rect x="4.500" y="4.500" width="7" height="7" fill="url(#g-gold)" stroke="#6d5a2c"/><rect x="1.500" y="1.500" width="5" height="5" fill="url(#g-gray)" stroke="#555"/><rect x="9.500" y="8.500" width="5" height="5" fill="url(#g-gray)" stroke="#555"/></symbol>
    <symbol id="w-z2" viewBox="0 0 16 16"><rect x="1.500" y="1.500" width="9" height="9" fill="url(#g-gold)" stroke="#6d5a2c"/><rect x="8.500" y="7.500" width="6" height="6" fill="url(#g-gray)" stroke="#555"/></symbol>
    <symbol id="w-z3" viewBox="0 0 16 16"><rect x="8.500" y="7.500" width="6" height="6" fill="url(#g-gray)" stroke="#555"/><rect x="1.500" y="1.500" width="9" height="9" fill="url(#g-gold)" stroke="#6d5a2c"/></symbol>
    <symbol id="w-z4" viewBox="0 0 16 16"><rect x="1.500" y="1.500" width="5" height="5" fill="url(#g-gray)" stroke="#555"/><rect x="9.500" y="8.500" width="5" height="5" fill="url(#g-gray)" stroke="#555"/><rect x="4.500" y="4.500" width="7" height="7" fill="url(#g-gold)" stroke="#6d5a2c"/></symbol>

    <!-- status toolbar -->
    <symbol id="warn" viewBox="0 0 16 16"><path d="M8 1l7.500 14H.5z" fill="#fccb2c" stroke="#c8901c"/><path d="M8 5v5M8 11.500v1.800" stroke="#222" stroke-width="1.600"/></symbol>
    <symbol id="s-redo" viewBox="0 0 16 16"><circle cx="8" cy="8" r="7.300" fill="#dcebf7" stroke="#6d96b8"/><circle cx="8" cy="8" r="5.700" fill="url(#g-disc)"/><path d="M11 9a3 3 0 1 1-2-3.500M8 3.500l3 2-2.500 2" fill="none" stroke="#fff" stroke-width="1.400"/></symbol>
    <symbol id="s-pause" viewBox="0 0 16 16"><circle cx="8" cy="8" r="7.300" fill="#dcebf7" stroke="#6d96b8"/><circle cx="8" cy="8" r="5.700" fill="url(#g-disc)"/><path d="M6.500 5v6M9.500 5v6" stroke="#fff" stroke-width="1.800"/></symbol>
    <symbol id="s-play" viewBox="0 0 16 16"><circle cx="8" cy="8" r="7.300" fill="#dcebf7" stroke="#6d96b8"/><circle cx="8" cy="8" r="5.700" fill="url(#g-disc)"/><path d="M6 4.500L11 8l-5 3.500z" fill="#fff"/></symbol>
    <symbol id="s-stop" viewBox="0 0 16 16"><circle cx="8" cy="8" r="7.300" fill="#dcebf7" stroke="#6d96b8"/><circle cx="8" cy="8" r="5.700" fill="url(#g-disc)"/><path d="M5.500 5.500h5v5h-5z" fill="#fff"/></symbol>
    <symbol id="s-cancel" viewBox="0 0 16 16"><circle cx="8" cy="8" r="7.300" fill="#e4e0e0" stroke="#a08c8c"/><circle cx="8" cy="8" r="5.700" fill="#c8201c"/><path d="M5.500 5.500l5 5M10.500 5.500l-5 5" stroke="#fff" stroke-width="2"/></symbol>
    <symbol id="s-book" viewBox="0 0 16 16"><rect x="3.500" y="1.500" width="11" height="13" fill="#f0f4ee" stroke="#6d7a6d"/><path d="M6 4h6v3H6z" fill="#5ca05c"/><path d="M2 3h3M2 5.500h3M2 8h3M2 10.500h3M2 13h3M6 9h6M6 11.500h6" stroke="#666"/></symbol>
    <symbol id="c-top" viewBox="0 0 16 16"><use href="#p-cube"/><path d="M1 5l4-4h10l-4 4z" fill="#3a70a8" stroke="#1c4470"/></symbol>
    <symbol id="c-bot" viewBox="0 0 16 16"><use href="#p-cube"/><path d="M1 15l4-5h10l-4 5z" fill="#3a70a8" stroke="#1c4470"/></symbol>
    <symbol id="c-left" viewBox="0 0 16 16"><use href="#p-cube"/><path d="M1 5l4-4v9l-4 5z" fill="#3a70a8" stroke="#1c4470"/></symbol>
    <symbol id="c-right" viewBox="0 0 16 16"><use href="#p-cube"/><path d="M11 5l4-4v9l-4 5z" fill="#3a70a8" stroke="#1c4470"/></symbol>
    <symbol id="c-front" viewBox="0 0 16 16"><use href="#p-cube"/><path d="M1 5h10v10H1z" fill="#3a70a8" stroke="#1c4470"/></symbol>
    <symbol id="c-back" viewBox="0 0 16 16"><use href="#p-cube"/><path d="M5 1h10v9H5z" fill="#3a70a8" stroke="#1c4470"/></symbol>
    <symbol id="p-iso" viewBox="0 0 16 16"><path d="M8 1l6 5v5l-6 4-6-4V6z" fill="#dbe8f6" stroke="#6f87a0" stroke-width=".9"/><path d="M2 6l6 5 6-5M8 11v4M2 11l6-4 6 4M8 1v6" fill="none" stroke="#6f87a0" stroke-width=".9"/></symbol>
    <symbol id="c-ne" viewBox="0 0 16 16"><use href="#p-iso"/><path d="M8 1l6 5v5L8 7z" fill="#3a70a8" stroke="#1c4470" stroke-width=".8"/></symbol>
    <symbol id="c-nw" viewBox="0 0 16 16"><use href="#p-iso"/><path d="M8 1L2 6v5l6-4z" fill="#3a70a8" stroke="#1c4470" stroke-width=".8"/></symbol>
    <symbol id="c-se" viewBox="0 0 16 16"><use href="#p-iso"/><path d="M8 11l6-5v5l-6 4z" fill="#3a70a8" stroke="#1c4470" stroke-width=".8"/></symbol>
    <symbol id="c-sw" viewBox="0 0 16 16"><use href="#p-iso"/><path d="M8 11L2 6v5l6 4z" fill="#3a70a8" stroke="#1c4470" stroke-width=".8"/></symbol>

    <symbol id="orb" viewBox="0 0 36 36"><circle cx="18" cy="18" r="17" fill="#d8f0f8" stroke="#4a5f70" stroke-width="1.500"/><circle cx="18" cy="18" r="15" fill="url(#g-orb)" stroke="#1c6888" stroke-dasharray="5 2"/><path d="M8 14l5-4 6 3 10-1 2 9-7 5-12-2z" fill="#34607e"/><path d="M13 14l12 2M10 18l18 1M18 11l-2 12M25 12l-2 11" stroke="#6ba4c0"/><path d="M6 26c9 1 16-5 20-13l-5 2M26 13l1 6" fill="none" stroke="#d4f0fa" stroke-width="2"/><path d="M12 28l12-1" stroke="#9a7c70"/></symbol>
</svg>

<nav class="menu">
    <a href="#">File</a><a href="#">Edit</a><a href="#">View</a><a href="#">Draw</a><a href="#">Model</a><a href="#">Graphics</a><a href="#">Analyse</a><a href="#">Setup</a><a href="#">Reserves</a><a href="#">Section</a><a href="#">Datamine</a><a href="#">Geostatistics</a><a href="#">Strip Design</a><a href="#">Sections</a><a href="#">Schemas</a><a href="#">Drill Holes</a><a href="#">Faults</a><a href="#">Quality</a><a href="#">Survey Setup</a><a href="#">Process</a><a href="#">Interrogate</a><a href="#">Settings</a><a href="#">Windows</a><a href="#">Help</a>
</nav>

<div class="tool_row">
    <div class="toolbar">
        <button class="btn on" aria-label="Navigation"><svg><use href="#wheel"/></svg></button>
        <button class="btn" aria-label="Screen"><svg><use href="#monitor"/></svg></button>
        <button class="btn" aria-label="Windows"><svg><use href="#windows"/></svg></button>
        <button class="btn" aria-label="Tools"><svg><use href="#tools"/></svg></button>
        <button class="btn" aria-label="Plugins"><svg><use href="#puzzle"/></svg></button>
        <button class="btn" aria-label="Help"><svg><use href="#help"/></svg></button>
        <i class="more"></i>
    </div>
    <div class="toolbar">
        <button class="btn" aria-label="Find"><svg><use href="#glasses"/></svg></button>
        <i class="sep"></i>
        <button class="btn" aria-label="Check"><svg><use href="#checkimg"/></svg></button>
        <button class="btn" aria-label="Annotate"><svg><use href="#apencil"/></svg></button>
        <button class="btn" aria-label="Light"><svg><use href="#lamp"/></svg></button>
        <button class="btn" aria-label="Compare"><svg><use href="#imgsplit"/></svg></button>
        <button class="btn" aria-label="Path"><svg><use href="#pathpen"/></svg></button>
        <button class="btn" aria-label="Window"><svg><use href="#rulerwin"/></svg></button>
        <i class="sep"></i>
        <button class="btn" aria-label="Rotate"><svg><use href="#axesrot"/></svg></button>
        <button class="btn" aria-label="Lock Z"><svg><use href="#axeslock"/></svg></button>
        <button class="btn" aria-label="View plane"><svg><use href="#axesimg"/></svg></button>
        <i class="sep"></i>
        <button class="btn" aria-label="Open map"><svg><use href="#mapfolder"/></svg></button>
        <button class="btn" aria-label="Save map"><svg><use href="#mapsave"/></svg></button>
        <i class="sep"></i>
        <button class="btn" aria-label="Refresh"><svg><use href="#refresh"/></svg></button>
        <button class="btn on" aria-label="Section"><svg><use href="#solid"/></svg></button>
        <button class="btn on" aria-label="Lock section"><svg><use href="#solidlock"/></svg></button>
        <i class="more"></i>
    </div>
    <div class="toolbar">
        <button class="btn" aria-label="Redraw"><svg><use href="#rball"/></svg></button>
        <button class="btn" aria-label="Fit"><svg><use href="#fit"/></svg></button>
        <button class="btn" aria-label="Zoom window"><svg><use href="#zoomrect"/></svg></button>
        <button class="btn" aria-label="Pick"><svg><use href="#selpick"/></svg></button>
        <button class="btn" aria-label="Zoom layer"><svg><use href="#sellayers"/></svg></button>
        <button class="btn" aria-label="Zoom layers"><svg><use href="#sellayers"/></svg></button>
        <i class="sep"></i>
        <button class="btn" aria-label="Zoom point"><svg><use href="#zoompt"/></svg></button>
        <button class="btn" aria-label="Zoom in"><svg><use href="#zoomin"/></svg></button>
        <button class="btn" aria-label="Zoom out"><svg><use href="#zoomout"/></svg></button>
        <i class="more"></i>
    </div>
    <div class="toolbar">
        <button class="btn" aria-label="Layers"><svg><use href="#p-layers"/></svg></button>
        <button class="btn" aria-label="Open layer"><svg><use href="#grayfolder"/></svg></button>
        <button class="btn" aria-label="Close layer"><svg><use href="#layersx"/></svg></button>
        <button class="btn" aria-label="Attach"><svg><use href="#clip"/></svg></button>
        <button class="btn" aria-label="Detach"><svg><use href="#clipx"/></svg></button>
        <button class="btn" aria-label="Undo"><svg><use href="#undo"/></svg></button>
        <i class="more"></i>
    </div>
    <div class="toolbar">
        <button class="btn" aria-label="Colour"><svg><use href="#grid4"/></svg></button>
        <button class="btn" aria-label="Fill"><svg><use href="#bucket"/></svg></button>
        <button class="btn" aria-label="Line type"><svg><use href="#dashes"/></svg></button>
        <button class="btn" aria-label="Line weight"><svg><use href="#lines"/></svg></button>
        <button class="btn" aria-label="Brush"><svg><use href="#brush"/></svg></button>
        <i class="sep"></i>
        <button class="btn" aria-label="Properties"><svg><use href="#hand"/></svg></button>
        <i class="more"></i>
    </div>
    <div class="toolbar">
        <button class="btn" aria-label="New layer"><svg><use href="#newlayer"/></svg></button>
        <i class="sep"></i>
        <button class="btn" aria-label="Text"><svg><use href="#bigA"/></svg></button>
        <button class="btn" aria-label="Points"><svg><use href="#points"/></svg></button>
        <button class="btn" aria-label="Line"><svg><use href="#line"/></svg></button>
        <button class="btn" aria-label="Polyline"><svg><use href="#poly"/></svg></button>
        <button class="btn" aria-label="Polygon"><svg><use href="#penta"/></svg></button>
        <button class="btn" aria-label="Circle"><svg><use href="#circle"/></svg></button>
        <button class="btn" aria-label="Rectangle"><svg><use href="#rect"/></svg></button>
        <button class="btn" aria-label="Parallelogram"><svg><use href="#para"/></svg></button>
        <button class="btn" aria-label="Arc"><svg><use href="#arc"/></svg></button>
        <i class="more"></i>
    </div>
</div>

<div class="tool_row">
    <div class="toolbar">
        <button class="btn" aria-label="Edit point"><svg><use href="#penpt"/></svg></button>
        <i class="sep"></i>
        <button class="btn" aria-label="Select string"><svg><use href="#polysel"/></svg></button>
        <button class="btn" aria-label="Parallel"><svg><use href="#waves"/></svg></button>
        <button class="btn" aria-label="Angle"><svg><use href="#angle"/></svg></button>
        <button class="btn" aria-label="Inspect"><svg><use href="#polyzoom"/></svg></button>
        <button class="btn" aria-label="Drape"><svg><use href="#drape"/></svg></button>
        <button class="btn" aria-label="Project"><svg><use href="#project"/></svg></button>
        <button class="btn" aria-label="Smooth"><svg><use href="#curve"/></svg></button>
        <button class="btn" aria-label="Delete string"><svg><use href="#curvex"/></svg></button>
        <button class="btn" aria-label="Hatch"><svg><use href="#hatchpen"/></svg></button>
        <i class="sep"></i>
        <button class="btn" aria-label="Insert point"><svg><use href="#ptline"/></svg></button>
        <button class="btn" aria-label="Move point"><svg><use href="#axesnode"/></svg></button>
        <button class="btn" aria-label="Segment"><svg><use href="#segx"/></svg></button>
        <button class="btn" aria-label="Area"><svg><use href="#area"/></svg></button>
        <i class="sep"></i>
        <button class="btn" aria-label="Join"><svg><use href="#zseg"/></svg></button>
        <button class="btn" aria-label="Cross select"><svg><use href="#crosssel"/></svg></button>
        <button class="btn" aria-label="Cross"><svg><use href="#crossdot"/></svg></button>
        <button class="btn" aria-label="Explode"><svg><use href="#bomb"/></svg></button>
        <i class="more"></i>
    </div>
    <div class="toolbar">
        <button class="btn" aria-label="Snap vertical"><svg><use href="#snap1"/></svg></button>
        <button class="btn on" aria-label="Snap end"><svg><use href="#snap2"/></svg></button>
        <button class="btn" aria-label="Snap mid"><svg><use href="#snap3"/></svg></button>
        <button class="btn" aria-label="Snap line"><svg><use href="#snap4"/></svg></button>
        <button class="btn" aria-label="Snap grid"><svg><use href="#snap5"/></svg></button>
        <button class="btn" aria-label="Snap intersection"><svg><use href="#snap6"/></svg></button>
        <i class="more"></i>
    </div>
    <div class="toolbar">
        <button class="swatch" aria-label="Colour"><i class="white"></i></button>
        <button class="swatch" aria-label="Line width"><i class="thick"></i></button>
        <button class="swatch" aria-label="Line style"><i class="thin"></i></button>
        <button class="swatch" aria-label="Fill"><i></i></button>
        <button class="swatch" aria-label="Symbol"><i></i></button>
        <i class="more"></i>
    </div>
    <div class="toolbar">
        <button class="btn" aria-label="Select settings"><svg><use href="#selgear"/></svg></button>
        <button class="btn" aria-label="Select properties"><svg><use href="#selhand"/></svg></button>
        <i class="sep"></i>
        <button class="btn" aria-label="Unhighlight"><svg><use href="#selsungray"/></svg></button>
        <button class="btn" aria-label="Highlight"><svg><use href="#selsun"/></svg></button>
        <button class="btn" aria-label="Highlight pick"><svg><use href="#sunpick"/></svg></button>
        <button class="btn" aria-label="Highlight all"><svg><use href="#p-sun"/></svg></button>
        <i class="sep"></i>
        <button class="btn" aria-label="Lasso"><svg><use href="#lasso"/></svg></button>
        <button class="btn" aria-label="Select"><svg><use href="#selcur"/></svg></button>
        <button class="btn" aria-label="Select block"><svg><use href="#selblue"/></svg></button>
        <button class="btn" aria-label="Deselect"><svg><use href="#selx"/></svg></button>
        <i class="sep"></i>
        <button class="btn on" aria-label="Select inside"><svg><use href="#selc"/></svg></button>
        <button class="btn on" aria-label="Select crossing"><svg><use href="#selr"/></svg></button>
        <i class="more"></i>
    </div>
</div>

<main class="work">
    <aside class="nav">
        <div class="title_bar">
            <svg><use href="#wheel"/></svg><span>Navigation Bar</span>
            <button class="mini" aria-label="Pin"><svg><use href="#pin"/></svg></button>
            <button class="mini" aria-label="Close"><svg><use href="#close"/></svg></button>
        </div>
        <h1 class="nav_head"><svg><use href="#folder"/></svg>Explorer</h1>
        <div class="toolbar nav_tools">
            <button class="btn" aria-label="Home"><svg><use href="#home"/></svg></button>
            <button class="btn" aria-label="Back"><svg><use href="#back"/></svg></button>
            <button class="btn" aria-label="Forward"><svg><use href="#fwd"/></svg></button>
            <button class="btn" aria-label="Options"><svg><use href="#listopt"/></svg></button>
            <i class="sep"></i>
            <button class="btn" aria-label="View"><svg><use href="#glassesg"/></svg></button>
            <button class="btn faded" aria-label="Layers"><svg><use href="#p-layers"/></svg></button>
            <button class="btn faded" aria-label="Properties"><svg><use href="#hand"/></svg></button>
            <i class="more"></i>
        </div>
        <div class="filter">
            <span class="combo has_icon"><svg><use href="#computer"/></svg><select aria-label="Filter"><option>All</option></select></span>
            <button class="search">Search <b>»</b></button>
        </div>
        <div class="tree_box">
            <ul class="tree">
                <li><i></i><svg><use href="#t-poly"/></svg>3D Polygons</li>
                <li><i class="arrow"></i><svg><use href="#t-cad"/></svg>AutoCAD</li>
                <li><i></i><svg><use href="#t-batch"/></svg>Batch</li>
                <li><i></i><svg><use href="#t-block"/></svg>Blocks</li>
                <li><i class="arrow"></i><svg><use href="#t-data"/></svg>Data</li>
                <li><i class="arrow"></i><svg><use href="#t-design"/></svg>Design Data</li>
                <li><i></i><svg><use href="#t-dump"/></svg>Dumps</li>
                <li><i class="arrow"></i><svg><use href="#t-env"/></svg>Environment</li>
                <li><i></i><svg><use href="#t-fault"/></svg>Fault</li>
                <li><i></i><svg><use href="#t-graph"/></svg>Graphical Data</li>
                <li><i class="arrow"></i><svg><use href="#t-grid"/></svg>Grids</li>
                <li><i class="arrow"></i><svg><use href="#t-mxl"/></svg>Mxl</li>
                <li><i class="arrow"></i><svg><use href="#t-plane"/></svg>Planes</li>
                <li><i class="arrow"></i><svg><use href="#printer"/></svg>Plotting</li>
                <li><i class="arrow"></i><svg><use href="#t-qual"/></svg>Qualities</li>
                <li><i class="arrow"></i><svg><use href="#t-report"/></svg>Reports</li>
                <li><i></i><svg><use href="#t-shape"/></svg>Shapes</li>
                <li><i class="arrow"></i><svg><use href="#t-side"/></svg>Side Definitions</li>
                <li><i></i><svg><use href="#t-solid"/></svg>Solids</li>
                <li><i class="arrow"></i><svg><use href="#t-spec"/></svg>Specs</li>
                <li><i class="arrow"></i><svg><use href="#t-surf"/></svg>Surfaces</li>
            </ul>
            <div class="scroll_v">
                <button class="scroll_btn up" aria-label="Scroll up"></button>
                <div class="thumb tree_thumb"></div>
                <span class="fill"></span>
                <button class="scroll_btn down" aria-label="Scroll down"></button>
            </div>
        </div>
        <div class="splitter_dots"></div>
        <button class="nav_btn active"><svg><use href="#folder"/></svg>Explorer</button>
        <button class="nav_btn"><svg><use href="#n-loaded"/></svg>Loaded Data</button>
        <button class="nav_btn"><svg><use href="#n-proj"/></svg>Projects - Practice</button>
        <button class="nav_btn"><svg><use href="#n-users"/></svg>Sessions - None</button>
        <button class="nav_btn"><svg><use href="#n-screen"/></svg>Layout - None</button>
        <button class="nav_btn"><svg><use href="#n-gears"/></svg>Modules</button>
        <div class="nav_foot"></div>
    </aside>

    <section class="center">
        <div class="doc_tabs">
            <a href="#" class="doc_tab"><svg><use href="#tabcad"/></svg>CAD1</a>
            <button class="mini" aria-label="Close"><svg><use href="#close"/></svg></button>
        </div>
        <div class="canvas"></div>
        <div class="splitter_h"></div>
        <div class="title_bar">
            <svg><use href="#note"/></svg><span>Feedback</span>
            <button class="mini" aria-label="Pin"><svg><use href="#pin"/></svg></button>
            <button class="mini" aria-label="Close"><svg><use href="#close"/></svg></button>
        </div>
        <div class="feedback">
            <div class="side_tools">
                <button class="btn" aria-label="Save"><svg><use href="#save"/></svg></button>
                <button class="btn" aria-label="Copy"><svg><use href="#copy"/></svg></button>
                <button class="btn" aria-label="Clear"><svg><use href="#eraser"/></svg></button>
                <button class="btn" aria-label="Print"><svg><use href="#printer"/></svg></button>
                <button class="btn" aria-label="Mail"><svg><use href="#mail"/></svg></button>
                <i class="side_more"></i>
            </div>
            <div class="log_box">
                <div class="log_main">
                    <ul class="log">
                        <li><svg><use href="#info"/></svg>Display definition found for dh_B</li>
                        <li><svg><use href="#info"/></svg>Display definition found for int_C</li>
                        <li><svg><use href="#info"/></svg>Display definition found for dh_C</li>
                        <li><svg><use href="#info"/></svg>Display definition found for int_D</li>
                        <li><svg><use href="#info"/></svg>Display definition found for dh_D</li>
                        <li><svg><use href="#info"/></svg>Display definition found for int_E</li>
                        <li class="selected"><svg><use href="#info"/></svg>Display definition found for dh_E</li>
                    </ul>
                    <div class="scroll_v">
                        <button class="scroll_btn up" aria-label="Scroll up"></button>
                        <span class="fill"></span>
                        <div class="thumb log_thumb"></div>
                        <button class="scroll_btn down" aria-label="Scroll down"></button>
                    </div>
                </div>
                <div class="scroll_h">
                    <button class="scroll_btn left" aria-label="Scroll left"></button>
                    <div class="thumb wide_thumb"></div>
                    <span class="fill"></span>
                    <button class="scroll_btn right" aria-label="Scroll right"></button>
                </div>
            </div>
        </div>
        <div class="bottom_tabs">
            <a href="#" class="current"><svg><use href="#note"/></svg>Feedback</a>
            <a href="#"><svg><use href="#tracer"/></svg>Tracer</a>
            <a href="#"><svg><use href="#clipboard"/></svg>Snapshot</a>
        </div>
    </section>

    <aside class="right_tools">
        <button class="btn" aria-label="New window"><svg><use href="#w-new"/></svg></button>
        <button class="btn" aria-label="Delete window"><svg><use href="#w-del"/></svg></button>
        <button class="btn" aria-label="Window properties"><svg><use href="#w-prop"/></svg></button>
        <i class="hsep"></i>
        <button class="btn" aria-label="Window text"><svg><use href="#w-text"/></svg></button>
        <button class="btn on" aria-label="Window axes"><svg><use href="#w-axes"/></svg></button>
        <button class="btn" aria-label="Window scale"><svg><use href="#w-scale"/></svg></button>
        <button class="btn" aria-label="Window grid"><svg><use href="#w-grid"/></svg></button>
        <i class="hsep"></i>
        <button class="btn" aria-label="Split horizontal"><svg><use href="#w-hsplit"/></svg></button>
        <button class="btn" aria-label="Split vertical"><svg><use href="#w-vsplit"/></svg></button>
        <i class="hsep"></i>
        <button class="btn" aria-label="Swap windows"><svg><use href="#w-swap"/></svg></button>
        <button class="btn" aria-label="Lock window"><svg><use href="#w-lock"/></svg></button>
        <button class="btn" aria-label="Lock scale"><svg><use href="#w-rlock"/></svg></button>
        <i class="hsep"></i>
        <button class="btn" aria-label="Image"><svg><use href="#w-img"/></svg></button>
        <button class="btn" aria-label="Image off"><svg><use href="#w-gimg"/></svg></button>
        <i class="hsep"></i>
        <button class="btn" aria-label="Bring forward"><svg><use href="#w-z1"/></svg></button>
        <button class="btn" aria-label="Send backward"><svg><use href="#w-z2"/></svg></button>
        <button class="btn" aria-label="Send to back"><svg><use href="#w-z3"/></svg></button>
        <button class="btn" aria-label="Bring to front"><svg><use href="#w-z4"/></svg></button>
        <i class="more_v"></i>
    </aside>
</main>

<div class="tool_row status">
    <div class="toolbar">
        <label for="status">Status</label>
        <span class="combo flat w_status"><select id="status" class="blue"><option>Ready...</option></select></span>
        <i class="more"></i>
    </div>
    <div class="toolbar">
        <label for="stowed">Stowed</label>
        <span class="combo flat w_stowed"><select id="stowed"><option></option></select></span>
        <i class="more"></i>
    </div>
    <div class="toolbar">
        <label for="modules">Modules</label>
        <span class="combo flat has_icon w_modules"><svg><use href="#warn"/></svg><select id="modules"><option>Convert stratigraphic table to grid</option></select></span>
        <button class="btn" aria-label="Repeat"><svg><use href="#s-redo"/></svg></button>
        <button class="btn" aria-label="Pause"><svg><use href="#s-pause"/></svg></button>
        <button class="btn" aria-label="Play"><svg><use href="#s-play"/></svg></button>
        <button class="btn" aria-label="Stop"><svg><use href="#s-stop"/></svg></button>
        <i class="sep"></i>
        <button class="btn" aria-label="Cancel"><svg><use href="#s-cancel"/></svg></button>
        <i class="sep"></i>
        <button class="btn" aria-label="Save"><svg><use href="#save"/></svg></button>
        <button class="btn" aria-label="Log"><svg><use href="#s-book"/></svg></button>
        <i class="more"></i>
    </div>
    <div class="toolbar">
        <button class="btn" aria-label="Top"><svg><use href="#c-top"/></svg></button>
        <button class="btn" aria-label="Bottom"><svg><use href="#c-bot"/></svg></button>
        <button class="btn" aria-label="Left"><svg><use href="#c-left"/></svg></button>
        <button class="btn" aria-label="Right"><svg><use href="#c-right"/></svg></button>
        <button class="btn" aria-label="Front"><svg><use href="#c-front"/></svg></button>
        <i class="sep"></i>
        <button class="btn" aria-label="Back"><svg><use href="#c-back"/></svg></button>
        <button class="btn" aria-label="North east"><svg><use href="#c-ne"/></svg></button>
        <button class="btn" aria-label="North west"><svg><use href="#c-nw"/></svg></button>
        <button class="btn" aria-label="South east"><svg><use href="#c-se"/></svg></button>
        <button class="btn" aria-label="South west"><svg><use href="#c-sw"/></svg></button>
        <i class="more"></i>
    </div>
</div>

<footer class="info_bar">
    <span class="coords">36261.654, 98959.596, 2000000.000</span>
    <i class="sep"></i>
    <label for="viewport">Viewport:</label>
    <span class="combo flat w_view"><select id="viewport"><option>MAIN</option></select></span>
    <i class="sep"></i>
    <label for="scale">Scale 1 :</label>
    <span class="combo flat w_num"><select id="scale"><option>7790450</option></select></span>
    <i class="sep"></i>
    <label for="activez">Active Z:</label>
    <span class="combo flat w_num"><select id="activez"><option>0.000</option></select></span>
    <i class="sep"></i>
    <span>Selected: 0</span>
</footer>

<div class="dialog" role="dialog" aria-labelledby="dlg_title">
    <div class="dlg_title">
        <svg><use href="#orb"/></svg>
        <span id="dlg_title">Quality Definition</span>
        <button class="cap cap_info">i</button>
        <button class="cap cap_dock">[|]</button>
        <button class="cap cap_min" aria-label="Minimise"><i></i></button>
        <button class="cap cap_close">X</button>
    </div>
    <form class="dlg_body">
        <h2>Maintain a Quality Spec</h2>
        <section class="group">
            <h3>Quality Name (Avoid names already used for schema units)</h3>
            <div class="row quality_row"><label for="quality">Quality</label><span class="combo focus"><select id="quality"><option>rd</option></select></span></div>
        </section>
        <section class="group">
            <h3>Definition</h3>
            <div class="rows">
                <div class="row tall"><label for="desc">Description</label><input type="text" id="desc" class="long"></div>
                <div class="row tall"><label for="code_res">Code for Resource</label><input type="text" id="code_res" value="rd"></div>
                <div class="row tall"><label for="code_dil">Code for Dilution</label><input type="text" id="code_dil" value="drd"></div>
                <div class="row"><label for="w1">First Quality Weight</label><span class="combo"><select id="w1"><option></option></select></span></div>
                <div class="row"><label for="w2">Second Quality Weight</label><span class="combo"><select id="w2"><option></option></select></span></div>
                <div class="checks">
                    <label><input type="checkbox" checked>Weight by Thickness</label>
                    <label><input type="checkbox">Use Logarithm</label>
                    <label><input type="checkbox">Always Cumulative</label>
                </div>
                <div class="row"><label for="ptype">Percentage Type</label><span class="combo"><select id="ptype"><option>None</option></select></span></div>
                <div class="row"><label for="ucat">Unit Category</label><span class="combo"><select id="ucat"><option>decimal1</option></select></span></div>
                <div class="row"><label for="unit">Unit</label><span class="combo"><select id="unit"><option>Stnd Metric</option></select></span></div>
            </div>
        </section>
    </form>
    <div class="dlg_foot">
        <button class="push default">Ok</button>
        <button class="push">Apply</button>
        <button class="push">Reset</button>
        <button class="push">Cancel</button>
    </div>
</div>

</body>
</html>
```

FILE: styles.css
```css
* {
    box-sizing: border-box;
}

body {
    margin: 0;
    min-height: 100vh;
    display: flex;
    flex-direction: column;
    background: #bfdbff;
    font-family: "Open Sans", "Noto Sans", sans-serif;
    font-size: 11px;
    color: #000;
    overflow: hidden;
}

button, select, input {
    font: inherit;
    color: inherit;
    margin: 0;
}

button {
    padding: 0;
    border: 0;
    background: none;
}

a {
    color: inherit;
    text-decoration: none;
}

ul, h1, h2, h3 {
    margin: 0;
    padding: 0;
    list-style: none;
    font-size: 11px;
    font-weight: normal;
}

svg {
    width: 16px;
    height: 16px;
    flex: none;
    overflow: visible;
}

.sprite {
    position: absolute;
    width: 0;
    height: 0;
    overflow: hidden;
    visibility: hidden;
}

/* menu */
.menu {
    display: flex;
    gap: 12px;
    height: 19px;
    padding-left: 5px;
    line-height: 16px;
    white-space: nowrap;
}

/* toolbars */
.tool_row {
    display: flex;
    gap: 1px;
    height: 28px;
}

.toolbar {
    position: relative;
    display: flex;
    align-items: center;
    height: 27px;
    padding-left: 9px;
    border-bottom: 1px solid #6f9dd9;
    border-radius: 3px 0 0 3px;
    background: linear-gradient(#e0edff, #cfe2fe 50%, #b3d0fa);
}

/* dotted grip */
.toolbar::before {
    content: "";
    position: absolute;
    left: 3px;
    top: 6px;
    width: 2px;
    height: 15px;
    background: repeating-linear-gradient(#6f9dd9 0 2px, transparent 2px 4px);
}

.btn {
    width: 24px;
    height: 24px;
    flex: none;
    display: flex;
    align-items: center;
    justify-content: center;
}

.btn.on {
    border: 1px solid #8c7a55;
    border-radius: 2px;
    background: linear-gradient(#fbdcae, #fdc27e 45%, #fdb158 55%, #fee29a);
}

.faded {
    opacity: 0.5;
}

.sep {
    width: 6px;
    height: 14px;
    flex: none;
    background: linear-gradient(90deg, transparent 2px, #9ac6ff 2px 3px, #fff 3px 4px, transparent 4px);
}

.more {
    position: relative;
    align-self: stretch;
    width: 11px;
    margin-left: 3px;
    border-radius: 0 3px 3px 0;
    background: linear-gradient(#c5dcfb, #9fc0ee 60%, #739fdd);
}

.more::after {
    content: "";
    position: absolute;
    left: 3px;
    bottom: 3px;
    border: 3px solid transparent;
    border-top-color: #000;
    border-bottom-width: 0;
}

.more::before {
    content: "";
    position: absolute;
    left: 3px;
    bottom: 8px;
    width: 6px;
    height: 1px;
    background: #000;
}

.swatch {
    width: 32px;
    height: 24px;
    margin-right: 1px;
    display: flex;
    align-items: center;
    border: 1px solid #8ba0bd;
    background: #d4d4d4;
}

.swatch i {
    width: 22px;
    height: 22px;
    border-right: 1px solid #9a9a9a;
}

.swatch .white {
    background: #fff;
}

.swatch .thick {
    background: linear-gradient(transparent 10px, #000 10px 12px, transparent 12px);
}

.swatch .thin {
    background: linear-gradient(transparent 10px, #888 10px 11px, transparent 11px);
}

.swatch::after {
    content: "";
    margin-left: 2px;
    border: 2px solid transparent;
    border-top: 3px solid #000;
    border-bottom: 0;
}

/* combo box */
.combo {
    position: relative;
    display: flex;
    align-items: center;
    width: 124px;
    height: 20px;
    border: 1px solid #858585;
    border-radius: 2px;
    background: #fff;
}

.combo select {
    appearance: none;
    flex: 1;
    min-width: 0;
    height: 100%;
    padding: 0 24px 0 3px;
    border: 0;
    outline: 0;
    background: none;
}

.combo::before {
    content: "";
    position: absolute;
    right: 0;
    top: 0;
    bottom: 0;
    width: 21px;
    border-left: 1px solid #858585;
    background: linear-gradient(#f8f8f8, #cfcfcf);
}

.combo::after {
    content: "";
    position: absolute;
    right: 6px;
    top: 7px;
    border: 4px solid transparent;
    border-top: 4px solid #444;
    border-bottom: 0;
}

.combo.focus {
    outline: 2px solid #6a98d6;
    border-color: #4d6f9e;
}

.combo.has_icon svg {
    margin-left: 2px;
}

.combo.flat {
    border: 0;
    border-bottom: 1px solid #6f9dd9;
    border-radius: 0;
}

.combo.flat::before {
    width: 15px;
    border: 0;
    background: linear-gradient(#dbe8fb, #97bdf0);
}

.combo.flat::after {
    right: 3px;
    border-top: 5px solid #000;
}

/* work area */
.work {
    flex: 1;
    display: flex;
}

.nav {
    width: 270px;
    display: flex;
    flex-direction: column;
    background: #bfdbff;
}

.title_bar {
    display: flex;
    align-items: center;
    gap: 2px;
    height: 16px;
    padding-right: 2px;
    line-height: 14px;
    background: linear-gradient(#8fb0da, #98b9ec);
}

.title_bar span {
    flex: 1;
}

.mini {
    width: 15px;
    height: 14px;
    display: flex;
    align-items: center;
    justify-content: center;
}

.mini svg {
    width: 10px;
    height: 10px;
}

.nav_head {
    display: flex;
    align-items: center;
    gap: 6px;
    height: 33px;
    padding-left: 12px;
    font: bold 15px "Liberation Sans", sans-serif;
    color: #4f7cba;
    background: linear-gradient(#e8f2ff, #c3dcfd 60%, #b0d0fc);
}

.nav_head svg {
    width: 18px;
}

.nav_tools {
    width: 267px;
    height: 30px;
    padding-left: 12px;
}

.nav_tools .btn {
    margin-right: 1px;
}

.nav_tools .sep {
    width: 8px;
    height: 24px;
    background: linear-gradient(90deg, transparent 3px, #a4b4c8 3px 4px, transparent 4px);
}

.nav_tools .more {
    margin-left: auto;
    opacity: 0.7;
}

.filter {
    display: flex;
    align-items: center;
    gap: 4px;
    height: 32px;
    padding: 0 5px 2px 4px;
    background: #dceaff;
}

.filter .combo {
    flex: 1;
}

.search {
    width: 69px;
    height: 25px;
    border: 1px solid #e4efff;
    border-radius: 4px;
    background: #c9defd;
}

.search b {
    margin-left: 5px;
    font-size: 18px;
    font-weight: normal;
    line-height: 12px;
    vertical-align: -1px;
    color: #1818a0;
}

.tree_box {
    flex: 1;
    display: flex;
    width: 267px;
    border: 1px solid #7f8a9c;
    background: #fff;
}

.tree {
    flex: 1;
    display: flex;
    flex-direction: column;
    margin-bottom: -2px;
    font-family: "Liberation Sans", sans-serif;
}

.tree li {
    flex: 1;
    display: flex;
    align-items: center;
    gap: 3px;
}

.tree i {
    width: 18px;
    height: 8px;
}

.tree .arrow::before {
    content: "";
    display: block;
    width: 5px;
    height: 8px;
    margin-left: 10px;
    background: #8a8a8a;
    clip-path: polygon(0 0, 100% 50%, 0 100%, 0 15%, 1px 15%, 1px 80%, 4px 50%, 0 5%);
}

.scroll_v {
    display: flex;
    flex-direction: column;
    gap: 1px;
    width: 18px;
    padding: 1px;
    background: #efefef;
}

.scroll_h {
    display: flex;
    gap: 1px;
    height: 18px;
    margin-right: 18px;
    padding: 1px;
    background: #efefef;
}

.fill {
    flex: 1;
}

.scroll_btn {
    width: 16px;
    height: 16px;
    flex: none;
    border: 1px solid #777;
    border-radius: 2px;
    background: linear-gradient(#fdfdfd, #d2d2d2);
}

.scroll_btn::before {
    content: "";
    display: block;
    width: 8px;
    height: 5px;
    margin: auto;
    background: #444;
    clip-path: polygon(50% 0, 100% 100%, 0 100%);
}

.down::before {
    clip-path: polygon(0 0, 100% 0, 50% 100%);
}

.left::before, .right::before {
    width: 5px;
    height: 8px;
    clip-path: polygon(0 50%, 100% 0, 100% 100%);
}

.right::before {
    clip-path: polygon(0 0, 100% 50%, 0 100%);
}

.thumb {
    border: 1px solid #777;
    border-radius: 2px;
    background: linear-gradient(90deg, #fdfdfd, #cfcfcf);
}

.tree_thumb {
    height: 262px;
}

.log_thumb {
    height: 36px;
}

.wide_thumb {
    width: 150px;
    background: linear-gradient(#fdfdfd, #cfcfcf);
}

.splitter_dots {
    height: 9px;
    background: repeating-linear-gradient(90deg, #8aaedd 0 3px, transparent 3px 4px) center / 20px 3px no-repeat, linear-gradient(#e3efff, #b5d2fb);
}

.nav_btn {
    display: flex;
    align-items: center;
    gap: 7px;
    height: 30px;
    padding-left: 5px;
    border-top: 1px solid #1f4a86;
    font: bold 11px "Liberation Sans", sans-serif;
    color: #2a5290;
    background: linear-gradient(#d6e8ff, #b2d2fb 45%, #a4c8f8 55%, #b6d6ff);
}

.nav_btn.active {
    color: #000;
    background: linear-gradient(#ffdba8, #ffbf68 40%, #ffa83c 50%, #ffd27a);
}

.nav_foot {
    height: 28px;
    border-top: 2px solid #5a83bd;
    background: #abceff;
}

/* document area */
.center {
    flex: 1;
    min-width: 0;
    display: flex;
    flex-direction: column;
    padding-left: 5px;
    background: linear-gradient(90deg, #1f3d70 1px, #88abe0 1px 4px, #1f3d70 4px 5px, #bfdbff 5px);
}

.doc_tabs {
    display: flex;
    align-items: end;
    justify-content: space-between;
    height: 24px;
    padding: 0 1px 0 2px;
    border-bottom: 1px solid #fff;
}

.doc_tab {
    display: flex;
    align-items: center;
    gap: 4px;
    height: 21px;
    padding: 0 6px 0 3px;
    border: 1px solid #fff;
    border-bottom: 0;
    border-radius: 3px 3px 0 0;
    color: #15428b;
    background: #e2eeff;
}

.doc_tabs .mini {
    align-self: center;
}

.canvas {
    flex: 1;
    border: 2px solid #0000f0;
    background: #000;
}

.splitter_h {
    height: 6px;
    border-top: 1px solid #fff;
    border-bottom: 1px solid #1f3d70;
    box-shadow: inset 0 1px #1f3d70;
    background: #92b4e4;
}

.feedback {
    display: flex;
    height: 146px;
    padding-top: 2px;
    border-bottom: 1px solid #8a8a8a;
    background: #e4efff;
}

.side_tools {
    display: flex;
    flex-direction: column;
    align-items: center;
    width: 30px;
    padding-top: 10px;
    background: repeating-linear-gradient(90deg, #6f9dd9 0 2px, transparent 2px 4px) 6px 5px / 18px 2px no-repeat, linear-gradient(90deg, #e0edff, #a9c9f6);
}

.side_more {
    align-self: stretch;
    flex: 1;
    margin-top: 2px;
    background: linear-gradient(90deg, #c5dcfb, #8fb4e8);
}

.log_box {
    flex: 1;
    display: flex;
    flex-direction: column;
    border: 1px solid #7f8a9c;
    border-bottom: 0;
    background: #fff;
}

.log_main {
    flex: 1;
    display: flex;
}

.log {
    flex: 1;
    display: flex;
    flex-direction: column;
    padding: 0 0 2px 1px;
    font-family: "Liberation Mono", monospace;
    color: #000066;
}

.log li {
    flex: 1;
    display: flex;
    align-items: center;
    gap: 12px;
    padding-left: 8px;
}

.log svg {
    width: 9px;
    height: 9px;
}

.log .selected {
    border: 1px solid #cfcfcf;
    border-width: 1px 0;
    background: linear-gradient(#f4f4f4, #dedede);
}

.bottom_tabs {
    display: flex;
    gap: 10px;
    height: 22px;
    padding-left: 1px;
    margin-top: 4px;
    border-top: 1px solid #15428b;
    color: #15428b;
}

.bottom_tabs a {
    display: flex;
    align-items: center;
    gap: 3px;
    height: 19px;
}

.bottom_tabs .current {
    padding: 0 6px 0 3px;
    border-right: 1px solid #7fa4d8;
    background: #e8f2ff;
}

.right_tools {
    align-self: start;
    display: flex;
    flex-direction: column;
    align-items: center;
    width: 27px;
    margin-left: 2px;
    padding-top: 10px;
    border-right: 1px solid #6f9dd9;
    border-radius: 3px 3px 0 0;
    background: repeating-linear-gradient(90deg, #6f9dd9 0 2px, transparent 2px 4px) 5px 4px / 18px 2px no-repeat, linear-gradient(90deg, #e0edff, #b3d0fa);
}

.hsep {
    width: 16px;
    height: 5px;
    background: linear-gradient(transparent 1px, #9ac6ff 1px 2px, #fff 2px 3px, transparent 3px);
}

.more_v {
    position: relative;
    width: 26px;
    height: 11px;
    margin-top: 8px;
    background: linear-gradient(90deg, #c5dcfb, #739fdd);
}

.more_v::after {
    content: "";
    position: absolute;
    right: 4px;
    top: 3px;
    border: 3px solid transparent;
    border-left: 4px solid #000;
    border-right: 0;
}

/* status */
.status {
    gap: 2px;
    height: 30px;
    padding-top: 1px;
}

.status .combo {
    margin-left: 5px;
}

.w_status {
    width: 314px;
}

.w_stowed {
    width: 306px;
}

.w_modules {
    width: 299px;
}

.combo.w_modules svg {
    margin: 0 3px 0 6px;
}

.w_view {
    width: 125px;
}

.w_num {
    width: 101px;
}

.combo .blue {
    padding-left: 5px;
    color: #0000e8;
}

.info_bar {
    display: flex;
    align-items: center;
    gap: 3px;
    height: 23px;
    padding-left: 10px;
    color: #15428b;
    background: linear-gradient(#e0edff, #b3d0fa);
}

.info_bar label, .info_bar .sep + span {
    margin-left: 6px;
}

.info_bar select {
    color: #000;
}

.info_bar .coords {
    width: 203px;
    font-size: 12px;
}

/* dialog window over the canvas */
.dialog {
    position: absolute;
    left: calc(50% - 263px);
    top: 178px;
    width: 526px;
    border: 3px solid #6f9bd8;
    box-shadow: 0 1px #24406e;
    background: linear-gradient(135deg, #b4d4fe, #c6dffe 50%, #e0edff);
}

.dlg_title {
    display: flex;
    align-items: center;
    gap: 2px;
    height: 38px;
    padding: 0 6px 0 1px;
    font-weight: bold;
    color: #00008b;
    background: linear-gradient(90deg, transparent, #e4efff);
}

.dlg_title svg {
    width: 36px;
    height: 36px;
}

.dlg_title span {
    flex: 1;
    padding-left: 4px;
}

.cap {
    width: 22px;
    height: 22px;
    margin-bottom: 4px;
    border: 1px solid #5d6c80;
    border-radius: 4px;
    color: #fff;
}

.cap_info {
    color: #d8ff3c;
    background: linear-gradient(#6db4f8, #1e88f8 50%);
}

.cap_dock {
    background: linear-gradient(#b8e2fc, #7cc4f8 50%);
}

.cap_min {
    background: linear-gradient(#ccd8e8, #a8bcd8 50%);
}

.cap_min i {
    display: block;
    width: 10px;
    height: 3px;
    margin: 8px auto 0;
    background: #5a8cc0;
}

.cap_close {
    background: linear-gradient(#f8b0b0, #f07878 50%);
}

.dlg_body {
    padding: 0 6px 1px 15px;
}

.dlg_body h2 {
    height: 42px;
    padding: 17px 0 0 5px;
    font-size: 13px;
    font-weight: bold;
    line-height: 18px;
}

.group {
    margin-bottom: 4px;
    border: 1px solid #858585;
    border-radius: 2px;
    background: #fff;
}

.group h3 {
    height: 19px;
    padding-left: 4px;
    line-height: 19px;
    border-bottom: 1px solid #333;
    background: linear-gradient(#fff, #ebebeb);
}

.row {
    display: flex;
    gap: 7px;
    height: 27px;
}

.row.tall {
    height: 29px;
}

.row label {
    width: 202px;
    padding-top: 5px;
    text-align: right;
}

.row input {
    width: 46px;
    height: 22px;
    padding: 0 4px;
    border: 1px solid #858585;
    border-radius: 2px;
}

.row .long {
    width: 252px;
}

.quality_row {
    height: 34px;
    padding-top: 9px;
}

.rows {
    padding-top: 8px;
}

.checks {
    display: flex;
    align-items: flex-start;
    justify-content: space-between;
    height: 19px;
    padding: 0 4px 0 37px;
}

.checks label {
    display: flex;
    align-items: center;
    gap: 4px;
}

.checks input {
    appearance: none;
    width: 13px;
    height: 13px;
    border: 1px solid #666;
    background: linear-gradient(135deg, #fff, #ccc);
}

.checks input:checked {
    background: linear-gradient(45deg, transparent 40%, #333 40% 60%, transparent 60%) center / 7px 7px no-repeat, linear-gradient(135deg, transparent 40%, #333 40% 60%, transparent 60%) center / 7px 7px no-repeat, #eee;
}

.dlg_foot {
    display: flex;
    justify-content: flex-end;
    gap: 8px;
    height: 41px;
    padding: 10px 20px 0 0;
    background: linear-gradient(#fff, #e8e8e8 8px);
}

.push {
    width: 73px;
    height: 20px;
    line-height: 18px;
    border: 1px solid #24302c;
    border-radius: 5px;
    background: linear-gradient(#e8f2fc, #dfe9f4 50%, #cbd3dd 50%, #d4dce6);
}

.push.default {
    border: 2px solid #5fb4f8;
    box-shadow: inset 0 0 2px 1px #a8e4fc;
}
```
